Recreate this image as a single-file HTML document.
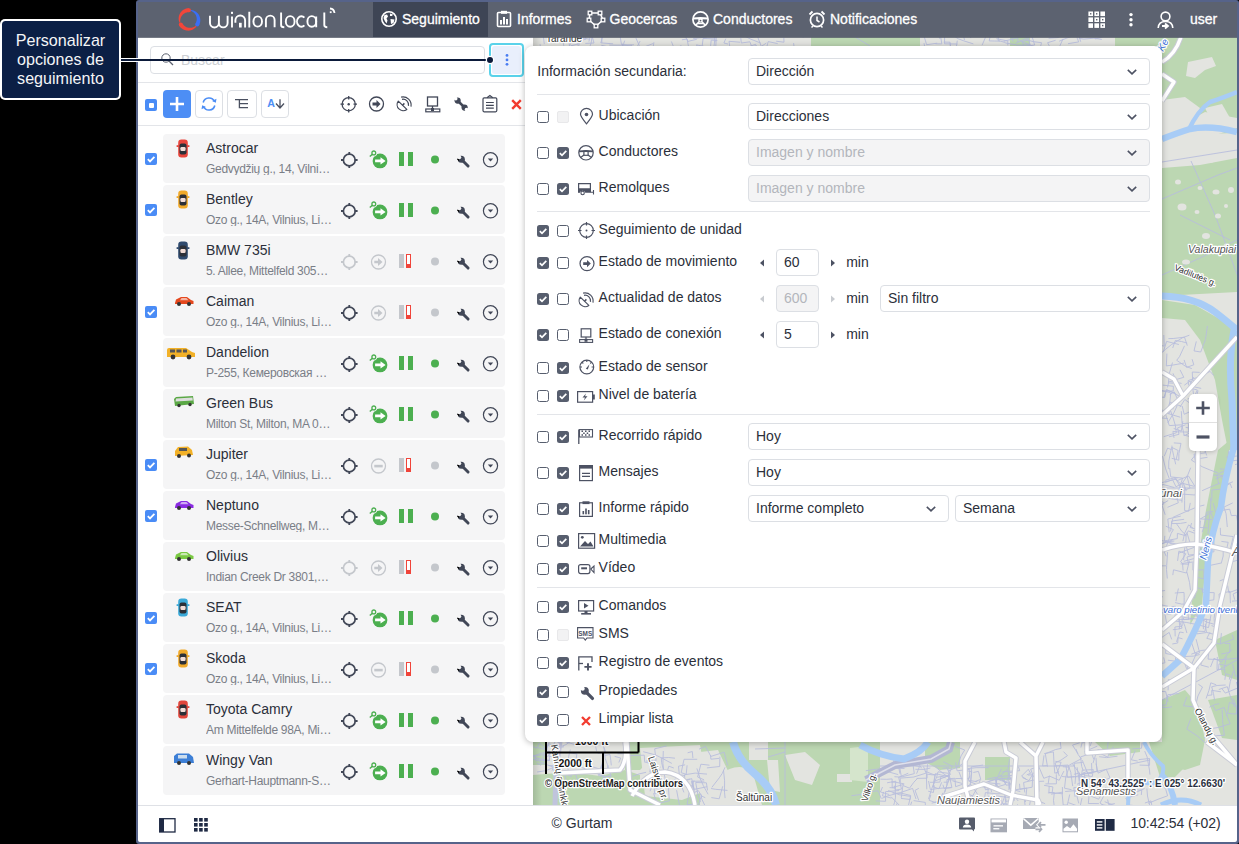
<!DOCTYPE html><html><head><meta charset="utf-8"><style>
*{box-sizing:border-box;margin:0;padding:0}
html,body{width:1239px;height:844px;overflow:hidden;background:#000;font-family:"Liberation Sans", sans-serif;position:relative}
.a{position:absolute}
.t{position:absolute;white-space:nowrap;line-height:1}
svg{position:absolute;overflow:visible}
</style></head><body>
<div class="a" style="left:136px;top:0px;width:1103px;height:844px;background:#56638a;border-radius:3px"></div><div class="a" style="left:138px;top:2px;width:1099px;height:35px;background:#5c6270"></div><div class="a" style="left:138px;top:37px;width:395px;height:768px;background:#fff"></div><div class="a" style="left:533px;top:37px;width:704px;height:768px;background:#e4e4e4;overflow:hidden"><svg style="left:0;top:0" width="704" height="768" viewBox="533 37 704 768"><rect x="533" y="37" width="704" height="768" fill="#e3e4e0"/><path d="M811 37 H920 V48 H811 Z" fill="#bcd7b2"/><path d="M1010 37 H1030 V48 H1010 Z" fill="#bcd7b2"/><path d="M1115 37 H1162 V48 H1115 Z" fill="#bcd7b2"/><path d="M1162 37 H1237 V118 L1205 112 L1190 120 L1162 125 Z" fill="#bcd7b2"/><path d="M1200 140 L1237 128 V292 L1162 296 V160 L1185 156 Z" fill="#bcd7b2"/><path d="M1162 300 L1195 305 L1225 322 L1237 336 V450 L1228 450 L1222 420 L1215 380 L1200 340 L1185 320 L1162 318 Z" fill="#bcd7b2"/><path d="M1218 450 L1230 440 L1226 480 L1215 520 L1206 560 L1202 605 L1190 625 L1192 600 L1198 560 L1206 510 Z" fill="#bcd7b2"/><path d="M1162 700 L1185 690 L1198 705 L1205 740 L1200 765 L1185 770 L1162 765 Z" fill="#bcd7b2"/><path d="M1208 700 L1237 695 V740 L1222 738 Z" fill="#bcd7b2"/><path d="M1215 640 L1237 630 V680 L1222 675 Z" fill="#bcd7b2"/><path d="M533 742 H545 V765 H533 Z" fill="#bcd7b2"/><path d="M533 775 L570 772 L600 776 L625 770 L640 775 L640 805 H533 Z" fill="#bcd7b2"/><path d="M625 742 H700 V760 L680 765 L650 760 L640 770 L625 770 Z" fill="#bcd7b2"/><path d="M640 780 L700 775 L700 805 H640 Z" fill="#bcd7b2"/><path d="M700 742 H868 V805 H700 Z" fill="#bcd7b2"/><path d="M868 742 H880 V805 H868 Z" fill="#bcd7b2"/><path d="M925 742 H960 V768 L940 770 L925 762 Z" fill="#bcd7b2"/><path d="M985 757 H1010 V780 H985 Z" fill="#bcd7b2"/><path d="M1149 742 H1192 V760 L1175 777 L1160 777 Z" fill="#bcd7b2"/><path d="M1095 742 H1140 V752 L1110 756 Z" fill="#bcd7b2"/><path d="M700 752 L718 750 L730 775 L728 805 H700 Z" fill="#e3e4e0"/><path d="M720 775 Q735 762 752 770 L762 805 H722 Z" fill="#e3e4e0"/><path d="M749 742 H768 V760 H749 Z" fill="#e3e4e0"/><path d="M767 760 H778 L780 792 L770 790 Z" fill="#e3e4e0"/><path d="M785 755 L805 752 L820 765 L812 785 L795 780 Z" fill="#e3e4e0"/><path d="M837 774 H852 V782 H837 Z" fill="#e3e4e0"/><path d="M640 748 L700 745 L708 790 L682 800 L645 796 Z" fill="#e3e4e0"/><path d="M1188 62 L1212 57 L1216 66 L1205 70 L1195 78 L1186 76 Z" fill="#e3e4e0"/><path d="M1162 100 L1185 97 L1200 108 L1192 128 L1175 136 L1162 136 Z" fill="#e3e4e0"/><path d="M1162 140 L1200 134 L1237 133 V158 L1200 165 L1162 168 Z" fill="#e3e4e0"/><path d="M1205 108 L1222 104 L1230 118 L1212 122 Z" fill="#e3e4e0"/><path d="M850 748 L868 746 L868 782 L850 780 Z" fill="#d5e5cc"/><path d="M561.2 746.5 L565.8 744.7 L573.2 739.6 L567.3 734.0 L563.0 741.1 M552.4 760.8 L556.9 761.1 L554.8 748.7 L564.0 746.7 M604.0 747.4 L605.2 758.5 L607.3 764.2 L611.0 775.3 L602.8 777.7 M548.6 765.4 L557.6 766.0 L556.3 772.7 L564.5 772.6 L566.2 781.3 M539.8 758.7 L529.9 760.1 L525.2 760.1 L523.1 768.5 M596.6 751.3 L594.2 738.6 L602.0 735.0 L598.7 726.7 M544.3 749.4 L546.0 744.9 L552.4 747.0 L558.2 735.8 M618.8 762.5 L620.7 758.0 L614.6 756.4 M548.9 750.5 L549.6 760.5 L538.8 758.7 L529.1 754.6 M611.3 765.4 L610.8 760.4 L610.0 754.5 L605.0 755.4 M533.0 746.5 L537.0 748.2 L539.3 743.2 L547.1 749.6 L541.2 760.6 M560.1 746.3 L548.1 743.8 L546.8 749.7 L545.2 760.5 M558.9 761.3 L568.0 762.9 L568.6 756.7 L570.3 749.6 M601.6 764.7 L598.6 775.7 L607.5 776.7 L611.7 776.1 M549.8 760.2 L536.0 760.8 L534.7 755.9 L540.2 753.5 L550.1 751.7 M589.8 766.0 L602.4 769.8 L610.4 773.4 M588.3 744.6 L587.9 731.1 L585.0 717.5 L572.9 722.5 L562.7 729.2 M563.5 758.5 L567.7 768.1 L569.3 773.2 L575.3 772.5 L577.7 781.2 M580.4 767.0 L592.5 771.6 L604.5 776.7 L597.6 787.4 M578.5 742.6 L579.5 738.6 L570.8 738.0 L566.2 738.6 L556.7 739.8 M537.9 747.7 L546.2 749.7 L551.0 737.5 L564.2 741.4 L574.7 744.5 M603.2 757.2 L601.0 770.3 L606.0 772.1 L608.1 765.3 M539.4 762.1 L552.0 766.6 L556.9 768.9 M552.1 770.6 L556.7 757.5 L548.5 756.1 M569.7 752.7 L576.9 754.1 L576.2 758.2 M558.7 770.8 L571.2 776.5 L572.6 769.9 M544.3 754.7 L531.1 755.7 L523.9 756.4 L520.5 746.0 L527.1 745.3 M602.7 744.5 L605.9 752.4 L597.8 753.4 M536.8 763.3 L540.9 765.1 L547.0 756.8 L551.8 751.9 M556.5 766.1 L546.1 770.6 L537.1 772.0 M901.3 797.8 L902.9 785.5 L909.5 788.2 L913.9 782.2 L917.6 778.3 M1047.4 765.6 L1042.6 765.9 L1044.0 755.3 M1018.5 766.8 L1019.7 770.7 L1006.0 771.4 L1001.7 772.1 M916.6 778.4 L927.1 778.2 L927.1 774.1 L932.5 774.9 L936.7 774.5 M896.9 803.3 L895.3 815.0 L894.7 822.3 L883.5 823.4 L871.8 826.9 M1005.5 794.4 L1002.1 803.4 L1010.6 808.4 L1019.4 814.8 L1021.2 810.7 M901.0 798.4 L910.2 799.5 L910.7 795.5 L901.9 793.3 L892.6 793.1 M930.4 768.0 L924.3 769.4 L915.4 769.3 M1062.1 776.5 L1068.0 777.1 L1074.6 776.6 L1084.8 776.8 L1083.7 772.3 M899.9 773.7 L898.7 767.0 L903.7 765.9 L916.7 761.1 L921.6 768.2 M969.9 775.7 L968.2 780.2 L977.3 781.8 M1044.0 785.3 L1052.9 786.9 L1052.2 792.5 M961.1 794.1 L960.4 788.9 L971.0 784.5 L978.4 795.5 M1028.0 775.1 L1032.7 774.7 L1032.2 787.2 L1020.0 789.3 L1019.5 783.8 M943.1 795.9 L945.8 788.4 L949.7 777.9 L943.0 773.4 L935.1 766.5 M1062.4 787.0 L1062.5 793.8 L1048.9 792.4 L1049.2 786.1 M958.9 771.7 L963.6 783.9 L955.6 786.7 L954.9 778.3 L948.4 778.7 M898.2 774.6 L885.8 771.1 L878.8 767.6 M955.4 778.5 L969.0 778.5 L969.9 769.3 L957.1 770.8 L955.6 762.4 M1054.6 765.9 L1068.2 765.0 L1070.8 772.5 L1072.7 786.1 M924.8 771.1 L935.0 775.2 L933.0 786.8 L939.0 788.8 L941.7 782.3 M985.7 782.5 L994.3 779.3 L1000.1 776.1 L1006.8 769.6 M943.3 798.6 L943.5 808.0 L954.3 810.5 M918.8 800.4 L915.0 790.4 L918.8 788.3 M952.5 780.9 L964.5 784.0 L965.9 770.4 L971.7 771.9 L970.6 783.4 M1004.7 789.4 L1004.8 794.0 L1006.3 801.7 L1015.3 797.4 L1018.2 801.0 M1022.4 777.6 L1029.0 780.6 L1033.6 772.6 M1012.9 780.1 L1007.7 777.8 L1006.7 782.5 L1002.0 780.3 M1033.7 777.3 L1030.7 769.2 L1038.7 766.4 L1043.8 778.3 L1049.9 776.1 M888.1 766.4 L894.5 768.1 L904.5 768.5 M1071.5 789.7 L1064.5 788.2 L1065.8 777.0 L1069.1 767.2 L1062.8 766.7 M973.1 796.1 L968.2 794.2 L970.5 782.4 L971.5 771.5 M945.6 777.8 L940.9 776.6 L939.9 782.1 L935.5 782.3 L929.9 782.3 M1077.6 775.6 L1086.3 773.3 L1092.0 773.3 L1091.5 763.1 M987.7 796.0 L994.4 797.6 L1000.9 798.4 L1001.2 804.9 M936.3 801.3 L937.3 807.7 L943.5 806.8 L942.6 792.9 M1056.6 774.2 L1061.1 762.3 L1055.3 761.3 M895.0 785.5 L895.5 797.2 L894.6 802.2 L892.4 809.4 M908.3 773.2 L898.6 777.3 L901.5 789.1 L895.7 790.0 L894.1 785.9 M892.7 769.1 L894.1 758.8 L886.4 757.0 M936.7 777.3 L949.3 775.2 L951.9 787.6 L944.1 788.6 L942.9 784.7 M1044.1 781.2 L1038.8 781.4 L1038.9 791.8 M1004.4 779.8 L1006.1 785.2 L1011.2 784.7 L1010.7 796.7 M1047.5 766.7 L1045.3 753.7 L1055.7 749.5 L1061.1 748.4 L1059.7 738.3 M916.6 773.7 L919.5 766.5 L906.1 763.7 M992.5 795.3 L997.6 796.1 L1010.0 797.6 L1008.6 804.5 M1011.8 782.9 L1008.9 773.1 L1017.0 770.6 M971.7 772.2 L971.2 766.9 L983.1 765.0 M888.2 790.5 L899.1 794.7 L910.5 796.4 L907.9 807.9 M1079.2 794.3 L1085.9 792.5 L1084.0 781.4 L1077.0 784.3 M1059.3 776.0 L1055.1 763.0 L1061.1 760.0 L1067.4 755.7 L1063.5 751.6 M1059.1 771.7 L1054.8 773.2 L1054.1 764.7 L1053.4 751.9 L1044.2 753.6 M954.3 780.0 L947.0 779.5 L946.8 785.3 L944.9 792.0 M1007.8 804.4 L1003.6 803.5 L1002.6 813.7 L989.7 812.4 L988.8 822.5 M880.5 779.2 L886.8 779.3 L892.1 778.9 L892.2 787.6 L903.8 784.4 M899.2 790.5 L885.5 791.7 L885.6 801.3 L875.9 800.9 M1026.7 774.9 L1030.6 773.3 L1028.3 769.3 L1021.6 776.1 L1026.6 779.5 M1009.5 781.6 L1009.5 788.6 L1020.3 791.6 M881.3 798.8 L878.2 790.8 L871.6 791.5 L864.7 794.0 L851.4 795.7 M933.2 787.2 L935.4 773.6 L948.7 776.8 L948.9 767.7 L942.5 768.4 M911.8 801.6 L908.6 811.1 L899.8 805.7 L891.1 796.8 M1047.9 792.9 L1054.3 792.6 L1053.5 800.4 L1055.1 813.4 L1059.9 811.6 M949.0 770.7 L959.0 766.3 L962.7 763.5 M998.1 779.5 L1010.8 783.9 L1012.0 778.0 L999.5 778.6 L988.4 781.5 M900.0 768.9 L901.4 777.0 L914.3 773.6 L913.2 766.0 M1000.4 784.0 L988.6 782.8 L987.8 794.5 M889.6 787.6 L895.3 788.0 L895.8 781.2 L887.1 782.8 M1045.1 803.7 L1039.0 801.1 L1037.2 807.0 L1036.4 812.6 L1033.9 821.2 M900.9 778.1 L913.8 777.0 L926.1 773.1 L923.5 766.6 M980.2 780.2 L976.7 788.8 L971.5 797.9 M984.3 799.7 L985.4 792.6 L997.0 793.8 L1004.4 793.6 L1010.7 794.7 M1030.9 798.1 L1028.8 809.1 L1027.6 814.6 M931.7 803.2 L936.5 801.8 L939.1 806.6 L931.2 809.5 L938.2 820.6 M957.7 766.4 L961.0 755.9 L964.7 750.0 L955.4 746.4 M928.5 799.1 L931.8 788.4 L936.7 776.9 L938.0 771.8 L948.2 773.3 M928.5 781.0 L930.4 789.6 L938.4 788.4 L951.1 787.5 M882.1 798.3 L887.8 795.9 L900.8 792.5 L912.6 788.4 L916.0 799.0 M1038.5 779.8 L1032.4 780.3 L1023.6 782.5 L1024.8 792.5 M934.9 781.0 L944.5 777.3 L950.5 774.4 L946.3 767.6 M1078.8 803.4 L1075.5 790.6 L1065.2 791.5 M1024.1 797.6 L1025.7 809.8 L1018.8 810.8 L1007.1 811.6 L1005.3 799.2 M1017.5 804.3 L1017.7 816.3 L1010.7 817.3 L1009.1 807.2 L1001.5 807.8 M891.4 798.1 L882.4 795.8 L883.7 791.9 M894.4 776.7 L900.2 777.1 L900.3 782.6 M913.6 800.6 L925.3 802.4 L925.5 813.3 L928.3 825.4 L928.6 834.9 M1045.4 783.9 L1056.4 783.8 L1056.3 774.4 M1048.2 783.7 L1049.3 776.0 L1059.2 780.3 L1063.9 771.1 M889.2 794.5 L880.4 792.0 L882.5 787.0 M1005.1 778.5 L995.6 779.9 L997.5 787.0 L985.5 789.8 L982.9 781.2 M934.3 785.3 L933.4 792.5 L928.2 791.2 M1079.3 781.0 L1079.6 773.0 L1073.9 774.3 M1011.6 796.6 L1012.7 785.9 L1014.3 775.2 L1004.0 776.1 L999.0 775.9 M964.3 769.0 L976.1 767.7 L988.7 767.6 M943.7 782.2 L948.1 782.2 L949.2 774.1 L952.2 766.2 L943.3 761.8 M975.1 781.5 L980.8 779.3 L978.4 771.4 L973.3 772.5 M904.3 783.9 L895.9 782.3 L891.4 782.1 M1051.1 794.2 L1062.0 792.2 L1063.2 805.0 L1067.3 805.1 L1069.7 794.5 M942.2 794.2 L938.3 803.5 L929.1 800.3 L930.8 794.9 M1009.0 790.2 L1008.7 776.7 L1008.0 770.0 L1009.5 759.1 M1001.2 804.1 L1000.3 813.9 L1011.1 814.2 L1017.4 815.2 M880.3 775.5 L878.3 768.9 L865.8 770.7 M1075.1 796.9 L1073.8 787.6 L1079.8 787.7 M926.8 789.3 L926.4 776.0 L927.6 764.2 M987.2 779.2 L996.2 777.1 L996.5 786.3 L990.5 786.5 L991.6 792.2 M995.6 779.4 L997.3 786.9 L1005.6 784.4 L1001.0 775.6 M1001.4 768.8 L997.7 776.8 L994.1 789.6 L981.0 786.4 L968.5 781.0 M947.8 804.8 L946.2 800.7 L954.7 799.3 M1008.0 801.9 L1014.2 800.6 L1014.4 789.9 L1026.8 788.1 L1025.4 802.0 M1068.3 802.6 L1080.0 806.9 L1082.0 798.0 M1077.1 767.2 L1079.2 780.5 L1079.5 790.3 M1082.9 762.4 L1074.1 763.3 L1075.7 775.2 L1075.0 783.9 M1086.8 794.5 L1098.7 799.2 L1105.5 787.5 L1113.4 794.1 M1099.2 756.7 L1106.5 757.6 L1117.5 756.2 M1107.9 751.4 L1107.6 747.2 L1108.3 739.9 M1083.2 770.7 L1081.7 766.4 L1080.6 756.9 L1091.6 753.3 L1093.8 759.5 M1082.3 760.2 L1087.5 773.0 L1091.6 772.4 L1096.9 771.3 L1096.0 757.9 M1107.6 799.5 L1108.7 804.7 L1114.9 803.6 M1080.9 747.5 L1082.3 741.6 L1085.5 731.8 M1090.2 746.1 L1092.9 737.4 L1105.0 740.0 M1105.7 790.1 L1103.6 796.2 L1100.0 803.0 L1108.0 808.5 M1144.9 803.0 L1151.0 800.9 L1153.3 813.4 L1153.6 818.0 L1162.4 819.6 M1135.3 750.5 L1131.3 759.8 L1137.7 761.1 M1144.5 788.5 L1135.0 792.8 L1130.6 782.7 L1126.3 785.0 L1129.7 788.9 M1132.1 748.9 L1141.5 748.2 L1142.1 742.7 M1104.7 801.7 L1114.9 805.8 L1122.7 810.7 L1119.5 813.9 M1093.0 763.1 L1096.6 751.6 L1107.7 757.2 L1109.7 752.1 L1113.4 746.7 M1075.9 748.9 L1078.1 754.5 L1081.2 758.8 L1069.4 765.0 M1148.5 803.3 L1157.9 799.3 L1167.6 795.8 L1165.8 789.6 L1162.6 784.1 M1097.9 782.8 L1110.0 777.9 L1106.3 769.3 L1098.1 773.1 L1096.0 763.6 M1081.6 776.4 L1082.2 770.2 L1093.3 769.6 L1092.3 776.5 L1085.2 775.6 M1089.2 776.4 L1086.8 771.3 L1080.5 774.9 L1072.4 763.7 M1076.6 776.7 L1067.5 777.2 L1066.0 765.7 M1146.9 788.5 L1147.5 796.0 L1149.8 805.9 L1140.6 806.4 L1127.5 804.8 M1122.3 781.8 L1122.6 785.9 L1122.9 794.8 M1138.7 759.6 L1149.6 758.5 L1149.5 765.4 L1139.6 765.1 M1134.0 795.5 L1133.4 789.7 L1141.8 790.2 L1141.3 795.0 M1138.3 794.8 L1125.8 798.1 L1129.0 803.8 L1121.3 809.2 M1149.9 774.6 L1149.5 770.2 L1147.1 756.9 L1144.7 751.1 M1105.1 777.4 L1102.2 785.7 L1090.6 779.8 L1082.0 776.3 M1098.9 803.6 L1088.3 803.5 L1089.6 791.4 M1106.6 751.9 L1097.9 749.4 L1096.8 753.9 M1101.5 804.6 L1113.2 806.6 L1110.6 815.7 M1082.4 743.0 L1093.7 739.9 L1103.4 736.0 L1108.4 733.9 M1084.1 751.9 L1089.3 749.6 L1097.3 746.1 M1079.7 742.8 L1072.5 745.1 L1077.9 753.8 M1169.3 404.9 L1178.4 401.2 L1174.2 391.8 L1169.5 394.8 M1174.0 437.9 L1172.9 431.4 L1177.5 431.8 L1188.7 432.1 L1188.5 424.1 M1192.1 359.2 L1193.8 364.8 L1186.6 367.4 L1184.1 359.9 M1198.5 380.7 L1192.6 380.4 L1192.3 372.0 L1199.7 372.4 M1166.9 353.6 L1166.3 365.9 L1173.8 364.9 L1183.9 363.1 M1198.1 390.6 L1196.5 395.6 L1191.1 404.0 L1184.8 399.5 L1179.9 407.2 M1166.7 391.6 L1162.5 390.7 L1155.6 389.0 L1159.3 378.7 M1187.2 343.1 L1181.5 341.5 L1175.3 340.5 L1172.7 348.0 M1196.5 423.0 L1194.9 427.0 L1189.4 436.4 M1188.7 385.5 L1188.1 380.6 L1200.5 376.3 L1210.1 371.4 L1213.8 375.6 M1167.9 418.6 L1158.4 417.5 L1156.7 428.6 M1187.5 399.0 L1193.9 396.8 L1192.5 387.0 L1190.2 381.0 L1184.3 385.2 M1165.3 413.4 L1170.4 402.2 L1177.2 405.5 L1174.2 412.2 L1167.8 422.8 M1181.3 411.2 L1182.1 423.6 L1188.0 423.2 L1197.5 424.2 L1199.3 410.6 M1171.9 445.6 L1172.5 450.5 L1173.7 455.8 L1175.7 464.3 M1181.6 383.4 L1168.9 381.2 L1167.5 387.4 M1182.8 421.3 L1181.3 431.1 L1173.7 428.5 M1173.0 373.3 L1175.7 379.7 L1183.8 377.3 L1180.0 369.8 M1168.4 338.6 L1173.2 338.5 L1184.5 337.2 L1187.3 345.6 M1191.8 368.6 L1185.4 366.2 L1176.7 360.3 L1179.6 356.5 L1184.5 345.8 M1169.1 406.6 L1173.2 418.1 L1175.4 425.6 L1176.3 432.8 L1163.7 436.7 M1163.6 398.0 L1166.7 389.6 L1179.1 396.0 M1165.0 412.6 L1169.3 425.6 L1181.8 424.8 L1184.3 435.7 L1193.3 431.1 M1172.8 409.4 L1175.6 401.5 L1178.7 396.7 M1173.2 383.2 L1168.4 382.9 L1169.0 374.6 L1172.5 362.5 M1185.6 427.3 L1195.5 429.3 L1193.6 437.3 L1183.4 435.0 M1182.2 406.0 L1184.2 414.3 L1193.1 410.2 L1200.7 407.2 L1208.0 403.0 M1168.9 436.8 L1179.0 434.3 L1177.6 427.9 L1185.6 424.8 M1166.3 391.6 L1170.8 393.0 L1169.8 402.0 L1167.2 413.3 L1180.2 417.2 M1193.5 377.0 L1189.7 385.9 L1201.2 388.4 M1163.8 335.0 L1164.2 346.1 L1159.4 345.2 M1196.9 434.5 L1198.3 446.5 L1198.5 458.7 L1207.5 457.3 M1189.4 335.2 L1182.6 337.7 L1171.3 344.7 L1165.5 349.4 L1156.1 357.6 M1192.1 388.6 L1197.4 390.0 L1192.6 399.6 M1171.5 449.7 L1167.6 448.1 L1164.3 456.2 M1163.3 351.9 L1166.6 341.4 L1178.9 344.5 M1175.7 393.4 L1166.1 389.9 L1164.8 397.4 L1156.1 396.7 L1156.0 389.4 M1162.8 385.1 L1173.4 386.3 L1173.2 391.0 L1163.4 391.2 L1149.8 388.2 M1196.3 341.4 L1194.0 350.9 L1200.7 352.0 L1205.5 339.5 L1207.4 326.0 M1181.3 406.2 L1173.7 403.6 L1169.2 413.4 L1157.5 407.9 L1153.9 412.2 M1227.3 527.0 L1226.1 513.8 L1223.9 507.1 L1232.7 502.9 M1187.5 606.6 L1197.3 607.3 L1197.3 619.1 L1184.2 617.6 M1175.1 602.6 L1181.7 604.1 L1186.1 604.0 L1188.0 613.9 L1188.6 619.8 M1171.7 458.3 L1178.8 460.2 L1178.9 453.5 L1181.0 443.4 L1173.8 442.9 M1198.5 553.7 L1187.0 557.0 L1188.6 564.2 L1180.6 563.9 M1163.9 503.9 L1153.7 508.1 L1151.4 504.5 L1142.9 512.5 L1148.5 517.7 M1206.1 544.3 L1199.7 545.9 L1195.6 546.9 L1184.5 550.9 L1178.2 553.4 M1182.5 493.0 L1180.7 487.8 L1175.2 477.6 L1165.3 480.3 M1199.6 544.4 L1201.2 551.9 L1213.9 551.9 L1214.1 544.4 L1212.4 530.7 M1230.4 603.2 L1230.0 591.3 L1219.0 594.0 L1220.0 607.1 M1166.5 545.9 L1171.2 533.3 L1173.4 529.6 L1165.8 526.2 M1186.5 522.4 L1180.4 523.4 L1171.6 523.6 L1172.8 518.4 M1186.9 532.5 L1189.8 542.2 L1185.7 544.2 L1188.7 555.1 L1201.2 553.7 M1172.5 609.2 L1185.7 612.8 L1186.3 605.8 M1169.3 478.7 L1165.7 468.9 L1162.6 456.5 L1156.7 457.7 M1164.8 535.8 L1164.5 540.9 L1177.3 538.6 L1177.4 533.4 L1186.3 535.9 M1213.4 475.1 L1227.0 475.5 L1226.6 469.4 L1219.9 468.9 M1182.2 614.3 L1182.1 626.2 L1174.9 627.0 L1175.2 636.4 M1192.8 618.9 L1183.4 619.7 L1184.7 611.9 L1195.9 616.2 M1207.6 607.5 L1199.9 606.2 L1196.4 616.2 L1206.7 622.1 L1217.2 625.1 M1195.2 563.6 L1198.7 555.6 L1203.8 548.0 M1190.5 590.2 L1189.5 582.4 L1186.9 572.1 M1221.8 562.9 L1209.5 565.5 L1207.8 556.9 L1203.1 556.6 M1177.4 478.8 L1172.0 480.0 L1161.9 482.6 M1165.2 514.8 L1161.7 504.4 L1168.2 500.5 M1196.0 465.0 L1194.0 454.2 L1205.2 452.9 L1205.3 447.4 M1198.7 562.2 L1192.1 562.1 L1182.5 563.4 L1183.1 570.5 M1186.3 491.1 L1183.2 482.7 L1176.0 486.8 L1172.6 479.8 L1165.3 482.4 M1184.1 519.3 L1171.8 521.0 L1171.2 526.8 L1170.6 531.4 M1167.3 578.5 L1166.5 569.6 L1166.7 565.3 L1167.6 552.0 M1193.1 530.5 L1198.5 530.2 L1198.9 518.8 L1212.1 519.6 M1219.7 580.9 L1228.8 577.5 L1226.2 573.4 M1166.1 565.8 L1156.6 565.9 L1146.8 566.5 M1227.4 474.7 L1221.7 476.3 L1215.6 478.8 M1211.8 500.8 L1211.9 490.0 L1224.5 488.8 L1223.9 495.3 M1177.6 560.9 L1178.9 551.1 L1185.8 553.8 L1180.6 561.8 L1183.7 564.4 M1204.4 505.0 L1197.7 506.7 L1185.0 512.0 L1172.8 517.4 M1177.2 480.6 L1188.5 476.0 L1195.5 487.2 M1174.3 487.5 L1162.4 484.3 L1157.9 494.5 L1156.9 499.4 L1164.3 502.8 M1215.0 525.2 L1211.0 512.6 L1200.4 518.9 M1227.6 585.5 L1228.8 592.7 L1240.1 588.6 L1238.4 584.6 M1183.8 561.3 L1194.7 558.4 L1197.5 565.9 M1171.2 607.0 L1175.3 606.2 L1175.0 619.3 L1187.6 619.5 M1218.7 484.2 L1216.8 474.6 L1225.8 470.3 M1232.8 561.6 L1241.0 559.2 L1238.2 552.1 L1231.4 553.7 M1196.1 577.0 L1203.8 579.0 L1203.9 569.8 L1192.9 570.2 L1192.9 562.7 M1217.1 511.1 L1229.7 509.2 L1231.3 515.6 L1236.5 515.4 L1238.1 524.7 M1174.3 541.0 L1167.5 541.8 L1162.4 543.2 M1202.1 490.7 L1210.2 487.1 L1220.3 483.0 M1174.8 593.0 L1184.0 592.4 L1184.2 597.6 L1184.1 603.9 L1182.7 612.9 M1167.5 507.3 L1178.3 502.8 L1176.5 495.6 L1182.3 494.5 L1181.9 502.6 M1221.1 475.2 L1224.7 486.3 L1230.2 483.6 L1231.8 488.0 M1198.0 534.5 L1188.3 530.9 L1185.9 534.8 L1182.1 531.6 L1176.4 523.6 M1217.9 472.9 L1209.8 469.9 L1202.1 466.7 L1191.3 460.0 L1197.5 452.3 M1170.7 614.6 L1164.4 613.2 L1158.2 612.0 M1232.0 601.2 L1243.9 600.1 L1251.3 600.5 L1251.3 605.3 M1221.4 562.8 L1223.2 556.0 L1223.2 550.9 M1207.4 527.8 L1199.8 527.5 L1200.5 520.6 M1176.0 601.2 L1176.8 596.1 L1178.4 588.5 M1186.9 475.7 L1190.0 488.1 L1183.2 490.5 L1173.3 492.4 L1174.3 496.4 M1180.4 546.1 L1175.5 545.1 L1164.6 541.3 L1151.8 537.9 L1153.4 533.4 M1182.0 500.3 L1171.2 498.8 L1166.8 497.4 L1159.5 495.1 L1158.7 507.5 M1190.3 502.9 L1188.6 511.3 L1184.6 510.5 L1184.6 500.7 L1184.8 486.7 M1210.1 497.7 L1210.9 501.9 L1210.2 512.4 L1208.9 521.2 L1208.0 534.2 M1205.1 590.4 L1196.5 587.3 L1194.6 598.5 M1230.1 549.8 L1233.3 536.6 L1220.5 535.0 L1220.3 527.8 M1213.1 511.5 L1206.5 512.2 L1205.2 522.3 L1202.2 532.2 M1182.9 541.1 L1184.6 533.3 L1188.6 524.9 L1192.8 528.0 M1165.1 590.5 L1158.5 591.4 L1157.6 604.1 L1168.1 606.3 M1215.4 608.1 L1214.1 618.4 L1214.7 626.4 L1213.8 634.3 L1206.6 632.4 M1172.8 575.1 L1173.5 569.8 L1186.4 573.0 L1189.4 560.8 M1194.4 486.4 L1182.9 483.4 L1182.2 494.1 L1195.2 495.0 L1197.5 483.0 M1183.6 560.1 L1184.6 549.0 L1186.0 540.0 L1186.1 533.8 M1204.7 601.0 L1213.8 599.9 L1214.2 592.7 L1202.5 592.3 L1202.2 587.7 M1206.7 455.5 L1204.4 448.9 L1213.6 448.0 M1221.5 485.5 L1225.7 484.5 L1232.9 481.8 M1168.7 469.1 L1168.8 461.0 L1171.6 447.3 L1178.2 450.5 L1176.3 459.0 M1234.7 599.7 L1233.1 594.0 L1243.6 589.0 L1240.7 580.3 L1252.4 578.2 M1181.9 545.2 L1169.0 542.4 L1165.0 541.3 M1163.0 596.8 L1157.3 596.5 L1149.8 596.9 L1151.4 602.4 L1147.4 603.8 M1169.7 468.1 L1170.7 476.9 L1182.6 478.1 L1178.5 491.2 M1180.8 516.1 L1167.8 519.0 L1169.2 532.4 M1216.9 515.3 L1215.3 510.5 L1213.2 503.0 M1235.0 464.6 L1244.0 462.2 L1243.5 454.9 L1244.7 446.1 L1246.0 442.3 M1190.7 467.7 L1187.5 475.6 L1181.3 484.5 L1174.1 477.9 M1197.3 518.0 L1195.2 528.8 L1190.2 527.5 L1191.6 523.1 M1228.7 450.8 L1227.5 461.2 L1241.2 459.9 L1239.7 455.7 L1226.2 457.1 M1203.7 548.3 L1201.9 539.8 L1207.0 539.4 M1172.7 539.9 L1160.4 544.4 L1162.7 548.0 L1166.2 556.3 M1221.4 541.4 L1228.2 542.3 L1226.0 551.7 L1238.3 551.5 L1240.2 562.4 M1194.2 631.0 L1204.9 631.5 L1206.9 619.1 L1200.2 619.5 M1173.1 680.6 L1168.4 679.5 L1168.1 690.4 M1190.9 718.4 L1186.8 729.1 L1197.2 735.9 L1205.3 742.8 L1211.8 737.5 M1232.7 664.2 L1235.4 676.3 L1240.1 674.8 L1246.4 686.8 M1219.2 703.7 L1215.1 704.5 L1209.4 707.2 M1186.7 697.0 L1183.5 705.8 L1196.0 707.0 M1189.5 673.7 L1188.2 669.4 L1184.6 656.5 L1193.7 656.1 L1199.7 654.5 M1228.4 691.4 L1230.3 681.5 L1233.4 671.0 M1191.3 654.2 L1201.1 650.5 L1211.4 649.4 M1167.2 626.8 L1165.3 615.7 L1162.1 608.7 M1216.2 684.8 L1210.8 682.8 L1208.9 690.5 L1206.1 698.5 M1226.6 666.1 L1219.0 663.8 L1218.5 669.9 M1182.8 621.0 L1184.9 626.2 L1186.9 633.0 M1172.8 629.7 L1177.6 629.2 L1182.1 628.1 L1177.4 615.7 L1187.5 610.9 M1217.3 657.0 L1217.0 669.8 L1224.8 669.1 M1176.5 641.9 L1179.7 632.0 L1183.7 632.7 M1224.7 643.5 L1229.9 643.4 L1229.8 652.3 L1221.2 654.0 M1193.9 626.1 L1197.0 633.9 L1206.5 632.5 L1205.2 623.8 M1227.3 716.2 L1224.2 707.5 L1215.6 710.5 L1213.3 706.2 M1233.0 698.5 L1236.7 708.1 L1245.9 702.8 L1253.4 710.8 M1175.5 621.1 L1186.8 622.5 L1198.3 624.9 L1208.5 627.6 L1211.0 614.9 M1226.3 656.8 L1224.6 666.6 L1224.8 672.8 M1235.2 703.9 L1229.3 702.6 L1227.5 713.3 L1236.3 714.1 L1237.1 705.0 M1236.4 682.1 L1238.0 687.9 L1225.3 693.1 L1221.8 688.5 M1163.7 657.4 L1165.0 662.8 L1156.4 664.3 M1172.3 644.0 L1177.7 643.0 L1178.1 637.6 L1182.5 638.8 M1168.0 701.9 L1165.7 691.6 L1159.1 691.4 L1154.5 691.5 L1151.7 704.2 M1234.5 707.0 L1230.0 695.4 L1227.3 686.7 L1218.8 689.5 M1222.1 709.9 L1222.8 722.8 L1224.3 735.3 L1216.2 735.7 L1204.1 737.7 M1208.8 667.2 L1200.7 665.0 L1204.5 654.6 M1196.9 652.4 L1191.4 664.8 L1198.7 668.2 M1179.4 693.5 L1167.8 694.7 L1166.2 705.0 L1157.1 705.4 M1210.5 667.0 L1214.0 658.2 L1221.4 662.2 L1228.1 653.5 L1231.9 649.4 M1209.2 649.2 L1208.0 659.1 L1220.5 659.7 L1232.7 658.7 L1243.3 657.6 M1229.3 679.6 L1230.1 675.3 L1225.6 673.6 L1224.9 679.8 M1220.9 643.6 L1233.8 639.1 L1232.2 634.7 M1193.3 667.9 L1186.7 668.8 L1183.1 659.3 M1171.9 706.8 L1166.5 707.6 L1157.0 706.7 L1154.3 718.8 M1215.8 642.9 L1220.3 644.2 L1221.4 633.1 M1179.3 629.3 L1179.6 625.2 L1178.4 612.9 M1181.4 662.3 L1175.2 661.1 L1174.9 668.0 M1196.1 639.2 L1199.6 652.7 L1195.5 654.7 L1191.7 643.0 M1214.6 700.5 L1213.5 693.5 L1211.7 686.8 L1217.1 685.5 L1225.7 685.0 M1220.9 691.8 L1211.7 690.3 L1211.9 695.0 L1207.3 695.4 M1195.7 705.2 L1197.9 696.1 L1202.5 687.0 L1198.4 684.3 M1226.4 714.3 L1230.2 723.8 L1218.2 727.5 L1209.9 728.8 L1213.6 739.1 M1165.8 648.8 L1165.7 653.5 L1175.6 655.4 L1175.5 661.2 L1167.9 660.2 M1203.4 629.2 L1203.2 619.1 L1211.0 620.0 M1171.7 639.4 L1169.2 632.4 L1161.7 637.5 L1152.7 646.3 L1144.0 639.0 M1211.5 625.6 L1218.5 628.0 L1213.8 640.1 L1206.8 638.4 L1210.0 632.2 M635.9 38.0 L639.2 45.4 L641.9 54.7 L652.3 53.4 L653.9 42.3 M601.9 42.9 L601.6 37.6 L602.2 26.9 L589.8 27.2 M570.8 45.4 L584.2 48.9 L582.1 57.3 L579.5 62.9 L575.2 61.2 M540.1 44.2 L540.6 48.8 L544.9 60.7 L549.6 71.7 L540.5 76.7 M777.7 43.6 L768.2 41.6 L764.6 55.1 L764.3 63.5 M714.0 38.9 L703.1 38.5 L701.9 48.1 L693.7 46.7 L679.7 47.1 M756.2 44.1 L746.7 47.5 L752.8 58.8 L756.8 65.5 L762.3 71.5 M622.5 43.6 L622.5 47.7 L630.3 48.1 L635.8 49.5 L640.1 41.0 M631.4 45.3 L631.3 57.8 L628.5 71.1 L627.4 76.5 L637.7 76.6 M696.8 39.3 L687.9 41.4 L682.6 30.9 M578.0 44.0 L571.8 45.5 L572.0 51.5 M562.9 41.2 L565.5 54.2 L569.4 53.3 L569.3 40.4 M571.7 41.1 L568.3 48.5 L566.5 54.2 L573.1 57.8 M577.0 39.0 L583.9 36.8 L591.3 33.4 L594.0 43.0 L585.3 43.4 M671.4 41.5 L674.3 48.8 L681.2 45.7 L686.6 55.4 L678.7 59.0 M544.3 44.1 L542.9 33.0 L541.4 24.8 L551.3 21.1 L564.4 18.0 M717.4 40.6 L711.2 40.1 L710.4 48.1 L715.7 48.0 L716.4 36.0 M631.9 45.1 L621.5 44.6 L620.4 38.1 L619.2 26.3 M750.6 37.6 L757.4 36.3 L761.3 46.4 L766.4 43.0 M573.0 39.1 L584.3 38.4 L589.3 39.2 M783.8 37.8 L784.0 42.2 L776.2 41.2 M725.8 38.6 L723.9 43.0 L728.0 44.0 M578.8 41.2 L586.1 39.1 L581.4 26.1 L588.7 22.7 L596.2 34.1 M580.6 38.6 L577.7 49.6 L587.7 51.9 L591.2 43.1 L592.2 34.8 M624.7 40.6 L621.8 49.3 L614.1 48.2 L605.3 46.2 L601.3 45.3 M715.1 42.1 L713.1 28.7 L709.0 16.4 L697.2 22.0 M756.4 45.9 L749.8 47.0 L740.4 49.3 L733.8 51.0 L736.9 62.9 M740.0 42.2 L729.0 41.3 L730.6 53.0 L743.1 50.4 M653.2 43.5 L643.4 47.3 L650.4 57.4 L642.8 64.7 M588.9 41.6 L591.8 29.8 L604.1 32.5 L600.8 42.9 L613.1 43.8 M696.7 44.8 L698.3 57.3 L694.0 57.1 L693.0 52.4 M696.4 44.9 L708.6 47.3 L713.9 47.5 L715.3 35.2 M577.6 45.4 L579.5 39.2 L566.7 37.0 M803.2 37.6 L803.4 31.4 L815.1 34.4 L822.9 34.5 M756.8 45.7 L751.9 47.2 L749.9 41.8 L741.3 43.0 L740.8 38.1 M693.3 38.5 L707.0 36.9 L706.2 30.1 M681.9 39.8 L687.1 39.0 L688.5 46.6 L689.2 55.3 M793.6 43.0 L794.3 48.8 L787.9 48.0 L783.9 48.5 L775.2 51.4 M760.6 43.0 L750.6 39.1 L744.6 36.1 M609.3 45.1 L622.3 45.2 L628.1 45.4 L633.9 44.7 M1101.8 39.4 L1093.8 38.2 L1083.9 39.1 L1078.8 38.3 M1020.3 40.9 L1033.2 46.2 L1040.4 49.4 M1027.5 40.2 L1022.0 41.4 L1025.8 50.5 M1018.0 42.2 L1017.2 30.7 L1014.7 22.9 L1010.6 23.2 L1009.6 18.4 M1003.7 41.3 L1017.2 37.9 L1014.9 29.2 L1009.2 30.5 L1013.1 41.5 M935.4 43.8 L941.8 43.9 L940.5 35.6 L932.2 36.1 M1017.1 45.9 L1015.2 52.5 L1020.1 53.5 M957.3 40.6 L956.3 47.2 L943.3 48.0 L942.9 58.6 M937.1 43.2 L926.6 44.7 L924.3 37.0 L923.8 32.4 M1025.9 45.9 L1034.7 45.0 L1030.7 32.4 L1029.6 25.6 L1029.7 16.8 M1005.3 42.9 L1018.9 45.3 L1030.1 44.6 L1028.1 37.6 L1015.8 43.1 M1055.6 40.3 L1047.6 42.7 L1052.0 51.1 L1042.1 54.1 M970.8 38.1 L969.4 34.3 L964.6 35.0 M982.1 45.2 L986.8 34.3 L989.7 27.8 L983.0 24.8 L986.2 15.8 M1048.6 38.2 L1058.6 37.5 L1058.2 30.7 L1058.8 18.9 L1059.3 7.9 M1026.1 39.6 L1033.0 41.6 L1041.5 42.7 L1039.5 51.0 M1063.0 38.9 L1058.7 48.5 L1056.5 55.8 L1061.0 56.6 M1005.3 42.5 L998.2 40.5 L998.9 28.6 M939.9 38.8 L934.9 26.8 L943.1 25.1 M950.0 42.8 L951.7 55.9 L963.9 53.2 M957.5 44.0 L944.5 43.8 L944.7 29.9 M996.4 38.7 L1007.8 41.0 L1007.8 45.4 M924.0 43.1 L926.0 54.0 L935.3 50.9 M943.7 42.1 L950.0 42.2 L950.8 50.3 M964.5 40.0 L963.1 33.7 L959.4 24.1 L956.9 12.2 M1059.2 41.2 L1067.2 37.9 L1078.4 34.2 L1080.7 41.7 M1068.0 43.7 L1078.7 41.9 L1076.9 37.4 M1000.0 41.1 L994.3 41.0 L989.2 40.9 L990.5 34.9 L997.8 36.0 M973.4 43.9 L963.3 40.7 L958.3 38.8 L952.0 34.9 M1095.2 39.0 L1100.9 37.3 L1108.5 34.7 L1103.3 25.0 L1095.9 27.4 M855 37 L870 46 M664.5 789.7 L660.1 789.0 L654.2 788.1 L654.7 793.9 L664.9 791.7 M690.1 779.0 L684.8 779.9 L684.5 774.8 L695.2 773.1 L707.0 774.1 M683.7 782.9 L674.8 782.4 L663.1 778.7 L658.9 776.3 M700.7 793.7 L701.9 799.3 L706.3 808.5 M694.0 780.4 L691.7 787.1 L690.8 791.3 M699.1 749.1 L705.5 746.4 L710.9 756.4 L724.2 752.2 L727.6 765.5 M692.7 782.4 L694.3 791.8 L695.8 804.5 L687.1 804.6 L689.3 791.4 M688.4 787.1 L690.9 794.6 L698.2 790.4 L702.1 796.7 M689.0 783.0 L681.5 783.7 L668.3 781.9 M650.0 791.2 L654.8 780.3 L649.0 777.2 M646.1 761.0 L656.1 760.8 L654.7 748.8 L666.7 745.9 M676.6 790.2 L678.8 801.8 L680.6 810.3 M668.4 787.8 L669.4 800.8 L657.0 803.6 L655.4 798.9 L653.6 793.2 M652.6 778.4 L656.6 765.1 L644.1 761.8 M675.0 758.2 L668.7 757.5 L661.3 757.9 L661.6 762.6 L663.3 769.4 M687.6 752.8 L692.3 751.5 L692.9 758.1 M659.5 769.7 L651.6 771.5 L651.8 776.6 L654.4 787.3 L660.4 787.4 M665.2 778.6 L664.1 774.0 L662.9 763.3 L663.3 751.0 M693.8 790.6 L691.4 781.3 L704.4 781.1 M647.7 780.2 L650.4 774.2 L661.4 780.0 M696.9 768.4 L700.1 778.5 L703.3 785.6 L708.1 794.3 M643.2 751.7 L654.7 754.7 L659.4 756.8 L671.8 763.4 M687.1 765.3 L686.2 774.3 L681.2 772.7 L684.0 759.3 L697.2 759.3 M660.9 778.4 L660.3 771.6 L649.8 772.1 L650.7 766.2 L660.7 767.1 M673.8 768.0 L668.8 766.2 L667.5 770.4 M691.3 790.8 L692.3 785.9 L683.3 784.7 M663.7 785.5 L671.9 781.8 L675.8 778.9 M644.6 761.6 L644.3 755.2 L630.5 755.5 L622.6 753.7 L617.5 753.8 M685.1 775.6 L679.3 774.7 L678.5 766.2 L685.1 764.8 M646.1 772.3 L639.2 773.9 L632.5 776.3 M725.0 767.3 L722.3 773.3 L719.3 777.8 L711.9 787.3 M707.2 786.7 L694.2 789.4 L691.7 778.6 L680.3 782.5 L683.9 792.4 M725.1 798.1 L724.5 792.2 L724.6 780.8 L723.5 770.3 M705.3 797.7 L701.3 795.9 L698.0 806.8 L696.2 812.3 M707.5 790.4 L706.4 782.8 L695.7 782.5 L698.0 795.2 L700.4 802.1 M704.0 779.8 L697.6 777.0 L700.9 764.2 L709.5 765.2 M710.5 755.0 L710.9 759.2 L719.0 758.4 M706.9 767.9 L719.7 766.5 L719.9 756.6 M722.7 786.3 L719.2 798.8 L711.3 797.6 M727.5 790.4 L715.5 789.3 L711.1 788.5 M1162 162 L1237 150 M1191 161 L1215 215 L1238 277 M1162 199 L1218 175 L1237 168 M1162 275 L1200 258 L1237 240 M1180 215 L1230 240 M785 742 V805 M755 749 L785 748 M768 757 L785 752 M880 766 H1075 M1162 488 H1197 M1080 775 L1150 760 M1162 700 L1237 660 " stroke="#b8bddc" stroke-width="0.9" fill="none"/><ellipse cx="1178" cy="182" rx="3" ry="2.5" fill="#e3e4e0"/><ellipse cx="1200" cy="188" rx="2.5" ry="2" fill="#e3e4e0"/><ellipse cx="1216" cy="192" rx="3.5" ry="2.5" fill="#e3e4e0"/><ellipse cx="1226" cy="206" rx="2" ry="2" fill="#e3e4e0"/><ellipse cx="1182" cy="207" rx="4.5" ry="3.5" fill="#e3e4e0"/><ellipse cx="1218" cy="216" rx="3" ry="2.5" fill="#e3e4e0"/><ellipse cx="1206" cy="236" rx="4" ry="3" fill="#e3e4e0"/><ellipse cx="1226" cy="246" rx="2.5" ry="2.5" fill="#e3e4e0"/><ellipse cx="1186" cy="262" rx="4" ry="2.5" fill="#e3e4e0"/><ellipse cx="1231" cy="190" rx="3" ry="3" fill="#e3e4e0"/><ellipse cx="1197" cy="212" rx="2.5" ry="2" fill="#e3e4e0"/><ellipse cx="1210" cy="160" rx="4" ry="3" fill="#e3e4e0"/><path d="M866 780 L895 765 L931 759 L949 749 L951 742" stroke="#b3b7d3" stroke-width="8" fill="none"/><path d="M866 780 L895 765 L931 759 L949 749 L951 742" stroke="#dfe0ea" stroke-width="1.5" fill="none"/><path d="M560 742 L556 770 L555 805" stroke="#c0c4dc" stroke-width="5" fill="none"/><path d="M1162 139 Q1180 132 1190 129 Q1210 125 1237 132" stroke="#a8ccf6" stroke-width="6.5" fill="none"/><path d="M1188 131 Q1198 110 1210 102 Q1222 98 1237 92" stroke="#a8ccf6" stroke-width="4.5" fill="none"/><path d="M1162 296 Q1195 297 1215 312 Q1228 322 1237 330" stroke="#a8ccf6" stroke-width="7" fill="none"/><path d="M1234 330 Q1228 360 1232 400 L1234 450" stroke="#a8ccf6" stroke-width="7" fill="none"/><path d="M1236 440 Q1224 480 1221 507 Q1212 530 1208 560 L1206 605 Q1195 632 1180 660 L1162 676" stroke="#a8ccf6" stroke-width="6.5" fill="none"/><path d="M733 742 Q738 760 755 774 Q772 788 776 805" stroke="#a8ccf6" stroke-width="8" fill="none"/><path d="M860 745 Q880 756 904 759 Q922 752 928 742" stroke="#a8ccf6" stroke-width="7" fill="none"/><path d="M1144 742 Q1150 755 1163 766 Q1165 778 1152 784 Q1135 780 1129 789 L1128 805" stroke="#a8ccf6" stroke-width="4" fill="none"/><path d="M1161 805 Q1181 795 1201 805" stroke="#a8ccf6" stroke-width="5" fill="none"/><path d="M1162 775 Q1172 785 1175 805" stroke="#a8ccf6" stroke-width="6" fill="none"/><path d="M1181 37 Q1175 55 1162 62" stroke="#c9cbd6" stroke-width="5.5" fill="none" stroke-linejoin="round"/><path d="M1162 74 L1174 82 L1162 101" stroke="#c9cbd6" stroke-width="5.5" fill="none" stroke-linejoin="round"/><path d="M1237 337 L1183 396 L1162 415" stroke="#c9cbd6" stroke-width="5.5" fill="none" stroke-linejoin="round"/><path d="M1162 372 L1174 379 L1183 396" stroke="#c9cbd6" stroke-width="5.5" fill="none" stroke-linejoin="round"/><path d="M1198 450 L1197 540 L1195 590 L1183 612 L1162 630" stroke="#c9cbd6" stroke-width="5.5" fill="none" stroke-linejoin="round"/><path d="M1162 550 Q1180 544 1195 544 Q1215 546 1237 553" stroke="#c9cbd6" stroke-width="5.5" fill="none" stroke-linejoin="round"/><path d="M1237 535 L1220 605 L1214 643 L1194 668" stroke="#c9cbd6" stroke-width="5.5" fill="none" stroke-linejoin="round"/><path d="M1162 644 L1194 668 L1162 687" stroke="#c9cbd6" stroke-width="5.5" fill="none" stroke-linejoin="round"/><path d="M1194 668 L1193 700 L1204 726 L1237 765" stroke="#c9cbd6" stroke-width="5.5" fill="none" stroke-linejoin="round"/><path d="M1087 742 V753 L1128 750 V780" stroke="#c9cbd6" stroke-width="5.5" fill="none" stroke-linejoin="round"/><path d="M1207 742 L1237 765" stroke="#c9cbd6" stroke-width="5.5" fill="none" stroke-linejoin="round"/><path d="M975 742 L965 761 V786 L970 805" stroke="#c9cbd6" stroke-width="5.5" fill="none" stroke-linejoin="round"/><path d="M943 797 L984 784 L1011 795 L1038 800 L1040 805" stroke="#c9cbd6" stroke-width="5.5" fill="none" stroke-linejoin="round"/><path d="M1004 742 L1006 752 L1016 758 L1013 791 L1010 805" stroke="#c9cbd6" stroke-width="5.5" fill="none" stroke-linejoin="round"/><path d="M1020 742 L1036 756 L1043 742 M1036 756 L1037 805" stroke="#c9cbd6" stroke-width="5.5" fill="none" stroke-linejoin="round"/><path d="M560 773 L620 770 Q628 760 625 742" stroke="#c9cbd6" stroke-width="5.5" fill="none" stroke-linejoin="round"/><path d="M627 742 L630 790 L660 805" stroke="#c9cbd6" stroke-width="5.5" fill="none" stroke-linejoin="round"/><path d="M632 796 Q645 772 665 772 Q690 775 695 805" stroke="#c9cbd6" stroke-width="5.5" fill="none" stroke-linejoin="round"/><path d="M1181 37 Q1175 55 1162 62" stroke="#ffffff" stroke-width="3.5" fill="none" stroke-linejoin="round"/><path d="M1162 74 L1174 82 L1162 101" stroke="#ffffff" stroke-width="3.5" fill="none" stroke-linejoin="round"/><path d="M1237 337 L1183 396 L1162 415" stroke="#ffffff" stroke-width="3.5" fill="none" stroke-linejoin="round"/><path d="M1162 372 L1174 379 L1183 396" stroke="#ffffff" stroke-width="3.5" fill="none" stroke-linejoin="round"/><path d="M1198 450 L1197 540 L1195 590 L1183 612 L1162 630" stroke="#ffffff" stroke-width="3.5" fill="none" stroke-linejoin="round"/><path d="M1162 550 Q1180 544 1195 544 Q1215 546 1237 553" stroke="#ffffff" stroke-width="3.5" fill="none" stroke-linejoin="round"/><path d="M1237 535 L1220 605 L1214 643 L1194 668" stroke="#ffffff" stroke-width="3.5" fill="none" stroke-linejoin="round"/><path d="M1162 644 L1194 668 L1162 687" stroke="#ffffff" stroke-width="3.5" fill="none" stroke-linejoin="round"/><path d="M1194 668 L1193 700 L1204 726 L1237 765" stroke="#ffffff" stroke-width="3.5" fill="none" stroke-linejoin="round"/><path d="M1087 742 V753 L1128 750 V780" stroke="#ffffff" stroke-width="3.5" fill="none" stroke-linejoin="round"/><path d="M1207 742 L1237 765" stroke="#ffffff" stroke-width="3.5" fill="none" stroke-linejoin="round"/><path d="M975 742 L965 761 V786 L970 805" stroke="#ffffff" stroke-width="3.5" fill="none" stroke-linejoin="round"/><path d="M943 797 L984 784 L1011 795 L1038 800 L1040 805" stroke="#ffffff" stroke-width="3.5" fill="none" stroke-linejoin="round"/><path d="M1004 742 L1006 752 L1016 758 L1013 791 L1010 805" stroke="#ffffff" stroke-width="3.5" fill="none" stroke-linejoin="round"/><path d="M1020 742 L1036 756 L1043 742 M1036 756 L1037 805" stroke="#ffffff" stroke-width="3.5" fill="none" stroke-linejoin="round"/><path d="M560 773 L620 770 Q628 760 625 742" stroke="#ffffff" stroke-width="3.5" fill="none" stroke-linejoin="round"/><path d="M627 742 L630 790 L660 805" stroke="#ffffff" stroke-width="3.5" fill="none" stroke-linejoin="round"/><path d="M632 796 Q645 772 665 772 Q690 775 695 805" stroke="#ffffff" stroke-width="3.5" fill="none" stroke-linejoin="round"/><text x="1188" y="253" font-family="Liberation Sans" font-size="10.5" fill="#555" font-style="italic" stroke="#fff" stroke-width="2.5" paint-order="stroke" stroke-linejoin="round">Valakupiai</text><text x="1173" y="270" font-family="Liberation Sans" font-size="8.6" fill="#333" transform="rotate(22 1174 272)" stroke="#fff" stroke-width="2.5" paint-order="stroke" stroke-linejoin="round">Vadilutės g.</text><text x="1160" y="497" font-family="Liberation Sans" font-size="11.5" fill="#555" font-style="italic" stroke="#fff" stroke-width="2.5" paint-order="stroke" stroke-linejoin="round">ūnai</text><text x="1232" y="556" font-family="Liberation Sans" font-size="12.5" fill="#555" font-style="italic" stroke="#fff" stroke-width="2.5" paint-order="stroke" stroke-linejoin="round">A</text><text x="1212" y="568" font-family="Liberation Sans" font-size="10" fill="#3a6ed8" font-style="italic" transform="rotate(-75 1204 568)" stroke="#fff" stroke-width="2.5" paint-order="stroke" stroke-linejoin="round">Neris</text><text x="1163" y="613" font-family="Liberation Sans" font-size="9.6" fill="#3a6ed8" font-style="italic" stroke="#fff" stroke-width="2.5" paint-order="stroke" stroke-linejoin="round">varo pietinio tvenkinys</text><text x="1192" y="710" font-family="Liberation Sans" font-size="9.3" fill="#333" transform="rotate(62 1193 712)" stroke="#fff" stroke-width="2.5" paint-order="stroke" stroke-linejoin="round">Olandų g.</text><text x="1076" y="795" font-family="Liberation Sans" font-size="11" fill="#555" font-style="italic" stroke="#fff" stroke-width="2.5" paint-order="stroke" stroke-linejoin="round">Senamiestis</text><text x="937" y="804" font-family="Liberation Sans" font-size="11" fill="#555" font-style="italic" stroke="#fff" stroke-width="2.5" paint-order="stroke" stroke-linejoin="round">Naujamiestis</text><text x="736" y="801" font-family="Liberation Sans" font-size="10" fill="#333" stroke="#fff" stroke-width="2.5" paint-order="stroke" stroke-linejoin="round">Šaltūnai</text><text x="868" y="803" font-family="Liberation Sans" font-size="9" fill="#333" transform="rotate(-72 867 803)" stroke="#fff" stroke-width="2.5" paint-order="stroke" stroke-linejoin="round">Vilko g.</text><text x="636" y="756" font-family="Liberation Sans" font-size="9.5" fill="#333" transform="rotate(72 641 765)" stroke="#fff" stroke-width="2.5" paint-order="stroke" stroke-linejoin="round">Laisvės pr.</text><text x="546" y="42" font-family="Liberation Sans" font-size="10" fill="#333" stroke="#fff" stroke-width="2.5" paint-order="stroke" stroke-linejoin="round">Tarande</text><text x="1163" y="52" font-family="Liberation Sans" font-size="10" fill="#3a6ed8" font-style="italic" transform="rotate(-62 1163 52)" stroke="#fff" stroke-width="2.5" paint-order="stroke" stroke-linejoin="round">Ke</text><text x="551" y="745" font-family="Liberation Sans" font-size="9.5" fill="#333" transform="rotate(80 551 745)" stroke="#fff" stroke-width="2.5" paint-order="stroke" stroke-linejoin="round">Karinių aplinkkelis</text><path d="M546 742 V774 M546 752.5 H638.5 M638.5 742 V752.5 M603 752.5 V774" stroke="#000" stroke-width="2" fill="none"/><text x="558.5" y="767" font-family="Liberation Sans" font-size="10.5" fill="#111" font-weight="bold" stroke="#fff" stroke-width="2.5" paint-order="stroke" stroke-linejoin="round">2000 ft</text><text x="575" y="745" font-family="Liberation Sans" font-size="10.5" fill="#111" font-weight="bold" stroke="#fff" stroke-width="2.5" paint-order="stroke" stroke-linejoin="round">1000 ft</text><text x="545" y="787" font-family="Liberation Sans" font-size="10.2" fill="#222" font-weight="bold" textLength="138" lengthAdjust="spacingAndGlyphs" stroke="#fff" stroke-width="2.5" paint-order="stroke" stroke-linejoin="round">© OpenStreetMap contributors</text><text x="1081" y="787.2" font-family="Liberation Sans" font-size="10.3" fill="#2a3040" font-weight="bold" textLength="144" lengthAdjust="spacingAndGlyphs" stroke="#fff" stroke-width="2.5" paint-order="stroke" stroke-linejoin="round">N 54° 43.2525' : E 025° 12.6630'</text></svg><div class="a" style="left:0;top:0;width:9px;height:768px;background:linear-gradient(to right, rgba(0,0,0,0.13), rgba(0,0,0,0))"></div><div class="a" style="left:656px;top:357px;width:28px;height:57px;background:#fff;border-radius:5px;box-shadow:0 1px 4px rgba(0,0,0,0.2)"></div><div class="a" style="left:656px;top:385px;width:28px;height:1px;background:#e0e0e0"></div><svg style="left:656px;top:357px" width="28" height="57" viewBox="0 0 28 57"><path d="M14 7.2 V20.8 M7.2 14 H20.8" stroke="#4d5263" stroke-width="2.6"/><path d="M7.5 43 H20.5" stroke="#4d5263" stroke-width="3.2"/></svg></div><div class="a" style="left:138px;top:37px;width:1099px;height:1px;background:rgba(84,90,104,0.8)"></div><div class="a" style="left:138px;top:805px;width:1099px;height:37px;background:#fff;border-top:1px solid #dfe1e6;border-radius:0 0 2px 2px"></div><div class="a" style="left:373px;top:2px;width:115px;height:35px;background:#3e4555"></div><svg style="left:0;top:0" width="220" height="40" viewBox="0 0 220 40"><path d="M189.00 8.20 L188.10 8.25 L187.21 8.37 L186.33 8.57 L185.47 8.85 L184.65 9.20 L183.86 9.61 L183.11 10.08 L182.40 10.62 L181.75 11.21 L181.15 11.85 L180.60 12.53 L180.12 13.25 L179.71 14.00 L179.36 14.79 L179.07 15.59 L178.86 16.40 L178.71 17.23 L178.64 18.06 L178.63 18.88 L178.70 19.70 L178.82 20.50 L179.02 21.28 L179.27 22.04 L179.58 22.76 L180.35 22.51 L180.25 21.80 L180.22 21.09 L180.23 20.39 L180.30 19.70 L180.43 19.03 L180.60 18.37 L180.81 17.73 L181.07 17.12 L181.37 16.54 L181.72 15.99 L182.09 15.47 L182.51 14.98 L182.95 14.53 L183.42 14.12 L183.91 13.74 L184.43 13.41 L184.96 13.12 L185.52 12.86 L186.08 12.65 L186.65 12.48 L187.24 12.35 L187.82 12.26 L188.41 12.21 L189.00 12.20 Z" fill="#f2463a"/><circle cx="189.00" cy="10.20" r="2.00" fill="#f2463a"/><path d="M179.04 25.45 L179.55 26.24 L180.13 26.97 L180.77 27.65 L181.47 28.27 L182.21 28.82 L183.00 29.30 L183.82 29.72 L184.67 30.06 L185.55 30.32 L186.44 30.51 L187.34 30.61 L188.23 30.65 L189.13 30.60 L190.01 30.48 L190.87 30.28 L191.70 30.02 L192.50 29.68 L193.27 29.28 L193.99 28.82 L194.66 28.31 L195.28 27.74 L195.85 27.13 L196.36 26.48 L196.80 25.80 L196.17 25.30 L195.61 25.80 L195.03 26.24 L194.41 26.63 L193.78 26.96 L193.13 27.25 L192.46 27.47 L191.79 27.65 L191.11 27.76 L190.43 27.83 L189.76 27.84 L189.09 27.80 L188.44 27.71 L187.80 27.57 L187.18 27.38 L186.58 27.15 L186.00 26.88 L185.45 26.56 L184.93 26.21 L184.44 25.82 L183.99 25.40 L183.56 24.95 L183.18 24.47 L182.82 23.97 L182.50 23.45 Z" fill="#f2463a"/><circle cx="180.77" cy="24.45" r="2.00" fill="#f2463a"/><path d="M198.96 25.45 L199.38 24.63 L199.72 23.78 L199.99 22.90 L200.17 22.01 L200.28 21.10 L200.32 20.19 L200.27 19.29 L200.15 18.40 L199.95 17.52 L199.68 16.67 L199.35 15.85 L198.94 15.06 L198.48 14.32 L197.96 13.62 L197.38 12.97 L196.76 12.38 L196.09 11.85 L195.39 11.38 L194.65 10.97 L193.89 10.63 L193.11 10.36 L192.32 10.15 L191.52 10.02 L190.72 9.95 L190.58 10.74 L191.26 11.00 L191.92 11.30 L192.54 11.65 L193.13 12.05 L193.67 12.48 L194.18 12.95 L194.64 13.45 L195.06 13.98 L195.44 14.53 L195.76 15.11 L196.04 15.70 L196.28 16.31 L196.46 16.92 L196.59 17.55 L196.68 18.17 L196.72 18.80 L196.72 19.42 L196.67 20.03 L196.57 20.64 L196.43 21.24 L196.26 21.81 L196.04 22.38 L195.78 22.92 L195.50 23.45 Z" fill="#3a6ef5"/><circle cx="197.23" cy="24.45" r="2.00" fill="#3a6ef5"/></svg><svg style="left:0;top:0" width="400" height="40" viewBox="0 0 400 40"><path d="M210 15.7 V23 A4.45 4.45 0 0 0 218.9 23 V15.7 M218.9 23 A4.35 4.35 0 0 0 227.6 23 V15.7 M232 16.5 V27.5 M235.4 22.8 V20.3 A4.85 4.85 0 0 1 245.1 20.3 V27.5 M249.3 11.8 V27.5 M265.9 27.3 V20 A4.35 4.35 0 0 1 274.6 20 V27.3 M281.1 12.4 V25 Q281.1 27.3 284.3 27.3 M324.3 12.4 V25 Q324.3 27.2 327.3 27.2 M316.2 16.4 V27.3 M304.4 17.6 A4.4 5.3 0 1 0 304.4 25.4" stroke="#fff" stroke-width="1.9" fill="none"/><ellipse cx="257.7" cy="21.5" rx="4.3" ry="5.1" stroke="#fff" stroke-width="1.9" fill="none"/><ellipse cx="290.2" cy="21.45" rx="4.4" ry="5.3" stroke="#fff" stroke-width="1.9" fill="none"/><ellipse cx="311.8" cy="21.45" rx="4.4" ry="5.3" stroke="#fff" stroke-width="1.9" fill="none"/><rect x="231" y="11.8" width="2" height="2.1" fill="#fff"/><rect x="239" y="22.8" width="2.7" height="4.7" fill="#fff"/></svg><svg style="left:329px;top:7px;" width="8" height="8" viewBox="0 0 8 8"><path d="M1 1.5 A5 5 0 0 1 5.5 6" stroke="#fff" stroke-width="1.8" fill="none"/><rect x="0.8" y="4.3" width="1.8" height="1.8" fill="#fff"/></svg><svg style="left:381px;top:11px;" width="16" height="16" viewBox="0 0 16 16"><circle cx="8" cy="8" r="7.2" fill="none" stroke="#fff" stroke-width="1.6"/><path d="M3.5 4 L6 3.5 L7 5.5 L5.5 7.5 L6.5 9.5 L5.5 12.5 L3.8 10 L2.5 7 Z" fill="#fff"/><path d="M9 2.5 L12 3.5 L11 5 L9 5 Z M9.5 8 L13.5 8.5 L12.5 12 L10 13 Z" fill="#fff"/></svg><div class="t" style="left:402px;top:12.05px;font-size:14px;color:#ffffff;font-weight:normal;-webkit-text-stroke:0.3px #fff">Seguimiento</div><svg style="left:496px;top:10px;" width="16" height="18" viewBox="0 0 16 18"><rect x="1.5" y="2.5" width="13" height="14" rx="1" fill="none" stroke="#fff" stroke-width="1.6"/><rect x="5" y="0.8" width="6" height="3" fill="#fff"/><rect x="4" y="10" width="2" height="4.5" fill="#fff"/><rect x="7" y="7" width="2" height="7.5" fill="#fff"/><rect x="10" y="9" width="2" height="5.5" fill="#fff"/></svg><div class="t" style="left:517px;top:12.05px;font-size:14px;color:#ffffff;font-weight:normal;-webkit-text-stroke:0.3px #fff">Informes</div><svg style="left:587px;top:10px;" width="18" height="18" viewBox="0 0 18 18"><path d="M3 3 L13 3 L16 10 L9 16 L2 10 Z" fill="none" stroke="#fff" stroke-width="1.5"/><rect x="1.2" y="1.2" width="3.6" height="3.6" fill="#5c6270" stroke="#fff" stroke-width="1.3"/><rect x="11.2" y="1.2" width="3.6" height="3.6" fill="#5c6270" stroke="#fff" stroke-width="1.3"/><rect x="14.2" y="8.2" width="3.6" height="3.6" fill="#5c6270" stroke="#fff" stroke-width="1.3"/><rect x="7.2" y="14.2" width="3.6" height="3.6" fill="#5c6270" stroke="#fff" stroke-width="1.3"/><rect x="0.2" y="8.2" width="3.6" height="3.6" fill="#5c6270" stroke="#fff" stroke-width="1.3"/></svg><div class="t" style="left:609.5px;top:12.05px;font-size:14px;color:#ffffff;font-weight:normal;-webkit-text-stroke:0.3px #fff">Geocercas</div><svg style="left:691px;top:10px;" width="19" height="19" viewBox="0 0 19 19"><circle cx="9.5" cy="9.5" r="7.6" fill="none" stroke="#fff" stroke-width="1.7"/><path d="M2 7.6 Q9.5 6.6 17 7.6 L17 9.6 Q9.5 8.8 2 9.6 Z" fill="#fff"/><path d="M7.3 9 H11.7 V12.5 H7.3 Z" fill="#fff"/><path d="M7.8 12 L4.5 15.5 M11.2 12 L14.5 15.5 M6.5 13.5 H12.5" stroke="#fff" stroke-width="1.6"/><circle cx="9.5" cy="10.6" r="0.9" fill="#5c6270"/></svg><div class="t" style="left:713px;top:12.05px;font-size:14px;color:#ffffff;font-weight:normal;-webkit-text-stroke:0.3px #fff">Conductores</div><svg style="left:808px;top:10px;" width="18" height="18" viewBox="0 0 18 18"><circle cx="9" cy="10" r="6.6" fill="none" stroke="#fff" stroke-width="1.7"/><path d="M9 6.5 V10.5 L11.5 12" stroke="#fff" stroke-width="1.5" fill="none"/><path d="M1.5 4.5 L4.5 1.5 M16.5 4.5 L13.5 1.5" stroke="#fff" stroke-width="1.8"/><path d="M5 16 L3.5 17.5 M13 16 L14.5 17.5" stroke="#fff" stroke-width="1.5"/></svg><div class="t" style="left:830px;top:12.05px;font-size:14px;color:#ffffff;font-weight:normal;-webkit-text-stroke:0.3px #fff">Notificaciones</div><svg style="left:1088px;top:11px;" width="18" height="18" viewBox="0 0 18 18"><rect x="0.40" y="0.50" width="4.6" height="4.6" fill="#fff"/><rect x="2.00" y="2.10" width="1.4" height="1.4" fill="#5c6270"/><rect x="6.40" y="0.50" width="4.6" height="4.6" fill="#fff"/><rect x="8.00" y="2.10" width="1.4" height="1.4" fill="#5c6270"/><rect x="12.40" y="0.50" width="4.6" height="4.6" fill="#fff"/><rect x="0.40" y="6.40" width="4.6" height="4.6" fill="#fff"/><rect x="6.40" y="6.40" width="4.6" height="4.6" fill="#fff"/><rect x="8.00" y="8.00" width="1.4" height="1.4" fill="#5c6270"/><rect x="12.40" y="6.40" width="4.6" height="4.6" fill="#fff"/><rect x="14.00" y="8.00" width="1.4" height="1.4" fill="#5c6270"/><rect x="0.40" y="12.30" width="4.6" height="4.6" fill="#fff"/><rect x="6.40" y="12.30" width="4.6" height="4.6" fill="#fff"/><rect x="12.40" y="12.30" width="4.6" height="4.6" fill="#fff"/><rect x="14.00" y="13.90" width="1.4" height="1.4" fill="#5c6270"/></svg><svg style="left:1128px;top:12px;" width="6" height="16" viewBox="0 0 6 16"><circle cx="3" cy="2.6" r="1.7" fill="#fff"/><circle cx="3" cy="7.7" r="1.7" fill="#fff"/><circle cx="3" cy="12.8" r="1.7" fill="#fff"/></svg><svg style="left:1157px;top:11px;" width="17" height="19" viewBox="0 0 17 19"><circle cx="8.5" cy="5.5" r="4.4" fill="none" stroke="#fff" stroke-width="1.6"/><path d="M1.2 17 Q1.5 10.5 8.5 10.5 Q15.5 10.5 15.8 17" fill="none" stroke="#fff" stroke-width="1.6"/><path d="M5 15 H10 M8 12.5 L11 15 L8 17.5" stroke="#fff" stroke-width="1.8" fill="none"/></svg><div class="t" style="left:1190px;top:12.05px;font-size:14px;color:#ffffff;font-weight:normal;-webkit-text-stroke:0.3px #fff">user</div><div class="a" style="left:150px;top:46px;width:335px;height:28px;border:1px solid #dcdfe4;border-radius:4px;background:#fff"></div><svg style="left:161px;top:53px;" width="14" height="14" viewBox="0 0 14 14"><circle cx="5" cy="5" r="4.2" fill="none" stroke="#5d6270" stroke-width="1"/><path d="M8 8 L12 12" stroke="#5d6270" stroke-width="1.2"/></svg><div class="t" style="left:181px;top:53.15px;font-size:14px;color:#cdd0d4;font-weight:normal;">Buscar</div><div class="a" style="left:489px;top:43px;width:35px;height:34px;border:2px solid #5ad2ea;border-radius:4px;background:#fff"></div><div class="a" style="left:492px;top:46px;width:29px;height:28px;background:#e9effc;border-radius:3px"></div><svg style="left:504px;top:53px;" width="6" height="14" viewBox="0 0 6 14"><circle cx="3" cy="2.4" r="1.4" fill="#4a7df2"/><circle cx="3" cy="6.9" r="1.4" fill="#4a7df2"/><circle cx="3" cy="11.3" r="1.4" fill="#4a7df2"/></svg><div class="a" style="left:138px;top:82px;width:387px;height:1px;background:#e3e5e9"></div><div class="a" style="left:138px;top:125px;width:387px;height:1px;background:#e3e5e9"></div><div class="a" style="left:145px;top:99px;width:12px;height:12px;background:#4a8cf6;border-radius:2px"></div><div class="a" style="left:148.5px;top:102.5px;width:5px;height:5px;background:#fff;border-radius:1px"></div><div class="a" style="left:163px;top:90px;width:28px;height:28px;background:#4d8ef5;border-radius:4px"></div><svg style="left:163px;top:90px;" width="28" height="28" viewBox="0 0 28 28"><path d="M14 7 V21 M7 14 H21" stroke="#fff" stroke-width="2.6"/></svg><div class="a" style="left:195px;top:90px;width:28px;height:28px;border:1px solid #dcdfe4;border-radius:4px;background:#fff"></div><div class="a" style="left:227px;top:90px;width:30px;height:28px;border:1px solid #dcdfe4;border-radius:4px;background:#fff"></div><div class="a" style="left:261px;top:90px;width:28px;height:28px;border:1px solid #dcdfe4;border-radius:4px;background:#fff"></div><svg style="left:195px;top:90px;" width="28" height="28" viewBox="0 0 28 28"><path d="M8.2 12.5 A6 6 0 0 1 19.5 11.5" stroke="#4d8ef5" stroke-width="1.6" fill="none"/><path d="M19.8 15.5 A6 6 0 0 1 8.5 16.5" stroke="#4d8ef5" stroke-width="1.6" fill="none"/><path d="M17 11 L20.8 12.8 L21.5 8.8 Z" fill="#4d8ef5"/><path d="M11 17 L7.2 15.2 L6.5 19.2 Z" fill="#4d8ef5"/></svg><svg style="left:227px;top:90px;" width="30" height="28" viewBox="0 0 30 28"><path d="M8 9.6 H21 M12.4 9.6 V17.6 H21 M12.4 13.7 H21" stroke="#4a5060" stroke-width="1.3" fill="none"/></svg><div class="t" style="left:267.2px;top:98.2px;font-size:10.6px;color:#4d8ef5;font-weight:bold">A</div><svg style="left:261px;top:90px;" width="28" height="28" viewBox="0 0 28 28"><path d="M19 9.3 V18 M15 13.5 L19 18 L23 13.5" stroke="#4a5060" stroke-width="1.3" fill="none"/></svg><svg style="left:340px;top:96px;" width="18" height="18" viewBox="0 0 18 18"><circle cx="8.7" cy="8.2" r="6.6" fill="none" stroke="#414757" stroke-width="1.3"/><circle cx="8.7" cy="8.2" r="1.2" fill="#414757"/><path d="M8.7 0 V3.5 M8.7 13 V16.5 M0.5 8.2 H4 M13.5 8.2 H17" stroke="#414757" stroke-width="1.3"/></svg><svg style="left:368px;top:96px;" width="17" height="17" viewBox="0 0 17 17"><circle cx="8.5" cy="8" r="7" fill="none" stroke="#414757" stroke-width="1.3"/><path d="M4.5 6.6 H8.5 V4 L12.5 8 L8.5 12 V9.4 H4.5 Z" fill="#414757"/></svg><svg style="left:394px;top:94px;" width="20" height="20" viewBox="0 0 20 20"><path d="M4.3 7.1 A6 6 0 0 0 12.8 15.4 Z" fill="none" stroke="#414757" stroke-width="1.2" stroke-linejoin="round"/><path d="M8.5 11.2 L10.4 9.4" stroke="#414757" stroke-width="1.5"/><path d="M8 5.3 A5.6 5.6 0 0 1 14.5 11.8 M7.1 3.1 A8.2 8.2 0 0 1 17 12.6" stroke="#414757" stroke-width="1.2" fill="none"/></svg><svg style="left:425px;top:96px;" width="16" height="17" viewBox="0 0 16 17"><rect x="2.5" y="1" width="10" height="9" fill="none" stroke="#414757" stroke-width="1.3"/><path d="M7.5 10 V13" stroke="#414757" stroke-width="1.3"/><rect x="0.8" y="13" width="14" height="2.8" fill="none" stroke="#414757" stroke-width="1.2"/><rect x="6" y="12" width="3" height="3" fill="#414757"/></svg><svg style="left:453.8px;top:96.5px;" width="16" height="16" viewBox="0 0 16 16"><path d="M3.5 3.5 L10.7 10.7" stroke="#414757" stroke-width="2.6"/><circle cx="3.6" cy="3.6" r="3.1" fill="#414757"/><circle cx="10.6" cy="10.6" r="3.1" fill="#414757"/><circle cx="1.8" cy="1.8" r="1.7" fill="#fff"/><path d="M1.8 1.8 L-1 -1" stroke="#fff" stroke-width="3"/><circle cx="12.4" cy="12.4" r="1.7" fill="#fff"/><path d="M12.4 12.4 L15 15" stroke="#fff" stroke-width="3"/></svg><svg style="left:482px;top:95px;" width="16" height="18" viewBox="0 0 16 18"><rect x="1" y="2.8" width="13.8" height="14" rx="1.2" fill="none" stroke="#414757" stroke-width="1.2"/><path d="M5 2.8 L7.9 0.6 L10.8 2.8" fill="none" stroke="#414757" stroke-width="1.2"/><path d="M4 7.5 H11.8 M4 10.3 H11.8 M4 13.1 H11.8" stroke="#414757" stroke-width="1.2"/></svg><svg style="left:511px;top:99px;" width="11" height="11" viewBox="0 0 11 11"><path d="M1.2 1.2 L9.8 9.8 M9.8 1.2 L1.2 9.8" stroke="#f23b2f" stroke-width="2.4"/></svg><div class="a" style="left:163px;top:134px;width:342px;height:49px;background:#f5f5f6;border-radius:4px"></div><div class="a" style="left:145px;top:153px;width:12px;height:12px;background:#4a8cf6;border-radius:2px"></div><svg style="left:145px;top:153px;" width="12" height="12" viewBox="0 0 12 12"><path d="M2.8 6.2 L5 8.4 L9.4 3.8" stroke="#fff" stroke-width="1.8" fill="none"/></svg><svg style="left:176px;top:138.5px;" width="14" height="19" viewBox="0 0 14 19"><rect x="2.2" y="0.6" width="9.6" height="17.8" rx="3.2" fill="#e8453c"/><rect x="3.5" y="4.6" width="7" height="10.8" rx="2" fill="#2c3038"/><rect x="4.4" y="8" width="5.2" height="4" rx="1.2" fill="#f2dcd6"/><rect x="0.6" y="6.2" width="2.2" height="1.8" fill="#e8453c"/><rect x="11.2" y="6.2" width="2.2" height="1.8" fill="#e8453c"/></svg><div class="t" style="left:206px;top:141.15px;font-size:14px;color:#2b2f3a;font-weight:normal;">Astrocar</div><div class="t" style="left:206px;top:163.14px;font-size:12px;color:#7a7e87;width:126px;overflow:hidden;text-overflow:ellipsis;letter-spacing:-0.3px">Gedvydžių g., 14, Vilnius, Lietuva</div><svg style="left:340px;top:150.5px;" width="18" height="18" viewBox="0 0 18 18"><circle cx="9.3" cy="9" r="5.9" fill="none" stroke="#414757" stroke-width="1.7"/><path d="M9.3 1 V4 M9.3 14 V17 M1 9 H4 M14.6 9 H17.6" stroke="#414757" stroke-width="1.8"/></svg><svg style="left:369px;top:149.5px;" width="20" height="20" viewBox="0 0 20 20"><circle cx="11" cy="10.9" r="7.4" fill="#4caf50"/><circle cx="4.7" cy="3" r="3.4" fill="#f5f5f6"/><path d="M6.1 9.5 H11.5 V7.2 L16.6 10.9 L11.5 14.6 V12.3 H6.1 Z" fill="#fff"/><circle cx="4.8" cy="2.9" r="1.9" fill="none" stroke="#4caf50" stroke-width="1.3"/><path d="M3.4 4.3 L0.8 6.6" stroke="#4caf50" stroke-width="1.4"/></svg><div class="a" style="left:399.3px;top:152.0px;width:5px;height:13.8px;background:#4caf50"></div><div class="a" style="left:407.7px;top:152.0px;width:5px;height:13.8px;background:#4caf50"></div><svg style="left:430px;top:154.5px;" width="10" height="10" viewBox="0 0 10 10"><circle cx="5" cy="4.5" r="4" fill="#4caf50"/></svg><svg style="left:457px;top:154.5px;" width="16" height="16" viewBox="0 0 16 16"><g transform="scale(0.98)"><path d="M5.6 5.6 L11.3 11.3" stroke="#414757" stroke-width="3" stroke-linecap="round"/><circle cx="4.4" cy="4.4" r="3.6" fill="#414757"/><path d="M2.2 2.2 L0 4.4 L2.2 6.6 M2.2 2.2 L4.4 0" stroke="none"/><circle cx="2.4" cy="2.4" r="1.9" fill="#f5f5f6"/><path d="M2.4 2.4 L-1 -1" stroke="#f5f5f6" stroke-width="3"/></g></svg><svg style="left:482px;top:150.5px;" width="18" height="18" viewBox="0 0 18 18"><circle cx="8.5" cy="8.8" r="7.1" fill="none" stroke="#414757" stroke-width="1.2"/><path d="M5.8 7.4 H11.2 L8.5 10.6 Z" fill="#414757"/></svg><div class="a" style="left:163px;top:185px;width:342px;height:49px;background:#f5f5f6;border-radius:4px"></div><div class="a" style="left:145px;top:204px;width:12px;height:12px;background:#4a8cf6;border-radius:2px"></div><svg style="left:145px;top:204px;" width="12" height="12" viewBox="0 0 12 12"><path d="M2.8 6.2 L5 8.4 L9.4 3.8" stroke="#fff" stroke-width="1.8" fill="none"/></svg><svg style="left:176px;top:189.5px;" width="14" height="19" viewBox="0 0 14 19"><rect x="2.2" y="0.6" width="9.6" height="17.8" rx="3.2" fill="#f0a92a"/><rect x="3.5" y="4.6" width="7" height="10.8" rx="2" fill="#2c3038"/><rect x="4.4" y="8" width="5.2" height="4" rx="1.2" fill="#f2dcd6"/><rect x="0.6" y="6.2" width="2.2" height="1.8" fill="#f0a92a"/><rect x="11.2" y="6.2" width="2.2" height="1.8" fill="#f0a92a"/></svg><div class="t" style="left:206px;top:192.15px;font-size:14px;color:#2b2f3a;font-weight:normal;">Bentley</div><div class="t" style="left:206px;top:214.14px;font-size:12px;color:#7a7e87;width:126px;overflow:hidden;text-overflow:ellipsis;letter-spacing:-0.3px">Ozo g., 14A, Vilnius, Lietuva</div><svg style="left:340px;top:201.5px;" width="18" height="18" viewBox="0 0 18 18"><circle cx="9.3" cy="9" r="5.9" fill="none" stroke="#414757" stroke-width="1.7"/><path d="M9.3 1 V4 M9.3 14 V17 M1 9 H4 M14.6 9 H17.6" stroke="#414757" stroke-width="1.8"/></svg><svg style="left:369px;top:200.5px;" width="20" height="20" viewBox="0 0 20 20"><circle cx="11" cy="10.9" r="7.4" fill="#4caf50"/><circle cx="4.7" cy="3" r="3.4" fill="#f5f5f6"/><path d="M6.1 9.5 H11.5 V7.2 L16.6 10.9 L11.5 14.6 V12.3 H6.1 Z" fill="#fff"/><circle cx="4.8" cy="2.9" r="1.9" fill="none" stroke="#4caf50" stroke-width="1.3"/><path d="M3.4 4.3 L0.8 6.6" stroke="#4caf50" stroke-width="1.4"/></svg><div class="a" style="left:399.3px;top:203.0px;width:5px;height:13.8px;background:#4caf50"></div><div class="a" style="left:407.7px;top:203.0px;width:5px;height:13.8px;background:#4caf50"></div><svg style="left:430px;top:205.5px;" width="10" height="10" viewBox="0 0 10 10"><circle cx="5" cy="4.5" r="4" fill="#4caf50"/></svg><svg style="left:457px;top:205.5px;" width="16" height="16" viewBox="0 0 16 16"><g transform="scale(0.98)"><path d="M5.6 5.6 L11.3 11.3" stroke="#414757" stroke-width="3" stroke-linecap="round"/><circle cx="4.4" cy="4.4" r="3.6" fill="#414757"/><path d="M2.2 2.2 L0 4.4 L2.2 6.6 M2.2 2.2 L4.4 0" stroke="none"/><circle cx="2.4" cy="2.4" r="1.9" fill="#f5f5f6"/><path d="M2.4 2.4 L-1 -1" stroke="#f5f5f6" stroke-width="3"/></g></svg><svg style="left:482px;top:201.5px;" width="18" height="18" viewBox="0 0 18 18"><circle cx="8.5" cy="8.8" r="7.1" fill="none" stroke="#414757" stroke-width="1.2"/><path d="M5.8 7.4 H11.2 L8.5 10.6 Z" fill="#414757"/></svg><div class="a" style="left:163px;top:236px;width:342px;height:49px;background:#f5f5f6;border-radius:4px"></div><svg style="left:176px;top:240.5px;" width="14" height="19" viewBox="0 0 14 19"><rect x="2.2" y="0.6" width="9.6" height="17.8" rx="3.2" fill="#2f4a6e"/><rect x="3.5" y="4.6" width="7" height="10.8" rx="2" fill="#2c3038"/><rect x="4.4" y="8" width="5.2" height="4" rx="1.2" fill="#f2dcd6"/><rect x="0.6" y="6.2" width="2.2" height="1.8" fill="#2f4a6e"/><rect x="11.2" y="6.2" width="2.2" height="1.8" fill="#2f4a6e"/></svg><div class="t" style="left:206px;top:243.15px;font-size:14px;color:#2b2f3a;font-weight:normal;">BMW 735i</div><div class="t" style="left:206px;top:265.14px;font-size:12px;color:#7a7e87;width:126px;overflow:hidden;text-overflow:ellipsis;letter-spacing:-0.3px">5. Allee, Mittelfeld 30539, Hannover</div><svg style="left:340px;top:252.5px;" width="18" height="18" viewBox="0 0 18 18"><circle cx="9.3" cy="9" r="5.9" fill="none" stroke="#c4c7cc" stroke-width="1.7"/><path d="M9.3 1 V4 M9.3 14 V17 M1 9 H4 M14.6 9 H17.6" stroke="#c4c7cc" stroke-width="1.8"/></svg><svg style="left:369px;top:251.5px;" width="20" height="20" viewBox="0 0 20 20"><circle cx="9.5" cy="10" r="7" fill="none" stroke="#c4c7cc" stroke-width="1.3"/><path d="M5.3 8.7 H9 V6 L13.5 10 L9 14 V11.3 H5.3 Z" fill="#c4c7cc"/></svg><div class="a" style="left:398.6px;top:254.2px;width:5.4px;height:13.4px;background:#c4c7cc"></div><div class="a" style="left:406.3px;top:254.2px;width:5.2px;height:13.4px;border:1px solid #f0443a;background:#fff"></div><div class="a" style="left:406.3px;top:264.0px;width:5.2px;height:3.6px;background:#f0443a"></div><svg style="left:430px;top:256.5px;" width="10" height="10" viewBox="0 0 10 10"><circle cx="5" cy="4.5" r="4" fill="#c4c7cc"/></svg><svg style="left:457px;top:256.5px;" width="16" height="16" viewBox="0 0 16 16"><g transform="scale(0.98)"><path d="M5.6 5.6 L11.3 11.3" stroke="#414757" stroke-width="3" stroke-linecap="round"/><circle cx="4.4" cy="4.4" r="3.6" fill="#414757"/><path d="M2.2 2.2 L0 4.4 L2.2 6.6 M2.2 2.2 L4.4 0" stroke="none"/><circle cx="2.4" cy="2.4" r="1.9" fill="#f5f5f6"/><path d="M2.4 2.4 L-1 -1" stroke="#f5f5f6" stroke-width="3"/></g></svg><svg style="left:482px;top:252.5px;" width="18" height="18" viewBox="0 0 18 18"><circle cx="8.5" cy="8.8" r="7.1" fill="none" stroke="#414757" stroke-width="1.2"/><path d="M5.8 7.4 H11.2 L8.5 10.6 Z" fill="#414757"/></svg><div class="a" style="left:163px;top:287px;width:342px;height:49px;background:#f5f5f6;border-radius:4px"></div><div class="a" style="left:145px;top:306px;width:12px;height:12px;background:#4a8cf6;border-radius:2px"></div><svg style="left:145px;top:306px;" width="12" height="12" viewBox="0 0 12 12"><path d="M2.8 6.2 L5 8.4 L9.4 3.8" stroke="#fff" stroke-width="1.8" fill="none"/></svg><svg style="left:173px;top:294px;" width="22" height="14" viewBox="0 0 22 14"><path d="M2 9 L3 5.5 L8 3 L14 3 L18 6 L20.5 7 L20.5 10 L2 10 Z" fill="#e5481e"/><path d="M8.5 4 L13.5 4 L15.5 6.2 L7 6.2 Z" fill="#fff" opacity="0.6"/><circle cx="6" cy="10" r="2" fill="#333"/><circle cx="16" cy="10" r="2" fill="#333"/></svg><div class="t" style="left:206px;top:294.15px;font-size:14px;color:#2b2f3a;font-weight:normal;">Caiman</div><div class="t" style="left:206px;top:316.14px;font-size:12px;color:#7a7e87;width:126px;overflow:hidden;text-overflow:ellipsis;letter-spacing:-0.3px">Ozo g., 14A, Vilnius, Lietuva</div><svg style="left:340px;top:303.5px;" width="18" height="18" viewBox="0 0 18 18"><circle cx="9.3" cy="9" r="5.9" fill="none" stroke="#414757" stroke-width="1.7"/><path d="M9.3 1 V4 M9.3 14 V17 M1 9 H4 M14.6 9 H17.6" stroke="#414757" stroke-width="1.8"/></svg><svg style="left:369px;top:302.5px;" width="20" height="20" viewBox="0 0 20 20"><circle cx="9.5" cy="10" r="7" fill="none" stroke="#c4c7cc" stroke-width="1.3"/><path d="M5.3 8.7 H9 V6 L13.5 10 L9 14 V11.3 H5.3 Z" fill="#c4c7cc"/></svg><div class="a" style="left:398.6px;top:305.2px;width:5.4px;height:13.4px;background:#c4c7cc"></div><div class="a" style="left:406.3px;top:305.2px;width:5.2px;height:13.4px;border:1px solid #f0443a;background:#fff"></div><div class="a" style="left:406.3px;top:315.0px;width:5.2px;height:3.6px;background:#f0443a"></div><svg style="left:430px;top:307.5px;" width="10" height="10" viewBox="0 0 10 10"><circle cx="5" cy="4.5" r="4" fill="#c4c7cc"/></svg><svg style="left:457px;top:307.5px;" width="16" height="16" viewBox="0 0 16 16"><g transform="scale(0.98)"><path d="M5.6 5.6 L11.3 11.3" stroke="#414757" stroke-width="3" stroke-linecap="round"/><circle cx="4.4" cy="4.4" r="3.6" fill="#414757"/><path d="M2.2 2.2 L0 4.4 L2.2 6.6 M2.2 2.2 L4.4 0" stroke="none"/><circle cx="2.4" cy="2.4" r="1.9" fill="#f5f5f6"/><path d="M2.4 2.4 L-1 -1" stroke="#f5f5f6" stroke-width="3"/></g></svg><svg style="left:482px;top:303.5px;" width="18" height="18" viewBox="0 0 18 18"><circle cx="8.5" cy="8.8" r="7.1" fill="none" stroke="#414757" stroke-width="1.2"/><path d="M5.8 7.4 H11.2 L8.5 10.6 Z" fill="#414757"/></svg><div class="a" style="left:163px;top:338px;width:342px;height:49px;background:#f5f5f6;border-radius:4px"></div><svg style="left:166px;top:347px;" width="30" height="13" viewBox="0 0 30 13"><path d="M1 3 Q1 1 3 1 L20 1 L26 5 L29 6 L29 10 L1 10 Z" fill="#f2b128"/><rect x="4" y="2.5" width="5" height="3" fill="#555"/><rect x="10.5" y="2.5" width="5" height="3" fill="#555"/><rect x="17" y="2.5" width="4" height="3" fill="#555"/><circle cx="7" cy="10" r="2.4" fill="#333"/><circle cx="23" cy="10" r="2.4" fill="#333"/></svg><div class="t" style="left:206px;top:345.15px;font-size:14px;color:#2b2f3a;font-weight:normal;">Dandelion</div><div class="t" style="left:206px;top:367.14px;font-size:12px;color:#7a7e87;width:126px;overflow:hidden;text-overflow:ellipsis;letter-spacing:-0.3px">P-255, Кемеровская область</div><svg style="left:340px;top:354.5px;" width="18" height="18" viewBox="0 0 18 18"><circle cx="9.3" cy="9" r="5.9" fill="none" stroke="#414757" stroke-width="1.7"/><path d="M9.3 1 V4 M9.3 14 V17 M1 9 H4 M14.6 9 H17.6" stroke="#414757" stroke-width="1.8"/></svg><svg style="left:369px;top:353.5px;" width="20" height="20" viewBox="0 0 20 20"><circle cx="11" cy="10.9" r="7.4" fill="#4caf50"/><circle cx="4.7" cy="3" r="3.4" fill="#f5f5f6"/><path d="M6.1 9.5 H11.5 V7.2 L16.6 10.9 L11.5 14.6 V12.3 H6.1 Z" fill="#fff"/><circle cx="4.8" cy="2.9" r="1.9" fill="none" stroke="#4caf50" stroke-width="1.3"/><path d="M3.4 4.3 L0.8 6.6" stroke="#4caf50" stroke-width="1.4"/></svg><div class="a" style="left:399.3px;top:356.0px;width:5px;height:13.8px;background:#4caf50"></div><div class="a" style="left:407.7px;top:356.0px;width:5px;height:13.8px;background:#4caf50"></div><svg style="left:430px;top:358.5px;" width="10" height="10" viewBox="0 0 10 10"><circle cx="5" cy="4.5" r="4" fill="#4caf50"/></svg><svg style="left:457px;top:358.5px;" width="16" height="16" viewBox="0 0 16 16"><g transform="scale(0.98)"><path d="M5.6 5.6 L11.3 11.3" stroke="#414757" stroke-width="3" stroke-linecap="round"/><circle cx="4.4" cy="4.4" r="3.6" fill="#414757"/><path d="M2.2 2.2 L0 4.4 L2.2 6.6 M2.2 2.2 L4.4 0" stroke="none"/><circle cx="2.4" cy="2.4" r="1.9" fill="#f5f5f6"/><path d="M2.4 2.4 L-1 -1" stroke="#f5f5f6" stroke-width="3"/></g></svg><svg style="left:482px;top:354.5px;" width="18" height="18" viewBox="0 0 18 18"><circle cx="8.5" cy="8.8" r="7.1" fill="none" stroke="#414757" stroke-width="1.2"/><path d="M5.8 7.4 H11.2 L8.5 10.6 Z" fill="#414757"/></svg><div class="a" style="left:163px;top:389px;width:342px;height:49px;background:#f5f5f6;border-radius:4px"></div><svg style="left:173px;top:395px;" width="22" height="14" viewBox="0 0 22 14"><path d="M1 4 L3 2 L20 1 L21 9 L2 11 Z" fill="#5aa845"/><path d="M3 3.5 L19.5 2.5 L19.8 5.5 L2.5 6.5 Z" fill="#ddd"/><circle cx="6" cy="10.5" r="1.7" fill="#333"/><circle cx="17" cy="9.5" r="1.7" fill="#333"/></svg><div class="t" style="left:206px;top:396.15px;font-size:14px;color:#2b2f3a;font-weight:normal;">Green Bus</div><div class="t" style="left:206px;top:418.14px;font-size:12px;color:#7a7e87;width:126px;overflow:hidden;text-overflow:ellipsis;letter-spacing:-0.3px">Milton St, Milton, MA 02186</div><svg style="left:340px;top:405.5px;" width="18" height="18" viewBox="0 0 18 18"><circle cx="9.3" cy="9" r="5.9" fill="none" stroke="#414757" stroke-width="1.7"/><path d="M9.3 1 V4 M9.3 14 V17 M1 9 H4 M14.6 9 H17.6" stroke="#414757" stroke-width="1.8"/></svg><svg style="left:369px;top:404.5px;" width="20" height="20" viewBox="0 0 20 20"><circle cx="11" cy="10.9" r="7.4" fill="#4caf50"/><circle cx="4.7" cy="3" r="3.4" fill="#f5f5f6"/><path d="M6.1 9.5 H11.5 V7.2 L16.6 10.9 L11.5 14.6 V12.3 H6.1 Z" fill="#fff"/><circle cx="4.8" cy="2.9" r="1.9" fill="none" stroke="#4caf50" stroke-width="1.3"/><path d="M3.4 4.3 L0.8 6.6" stroke="#4caf50" stroke-width="1.4"/></svg><div class="a" style="left:399.3px;top:407.0px;width:5px;height:13.8px;background:#4caf50"></div><div class="a" style="left:407.7px;top:407.0px;width:5px;height:13.8px;background:#4caf50"></div><svg style="left:430px;top:409.5px;" width="10" height="10" viewBox="0 0 10 10"><circle cx="5" cy="4.5" r="4" fill="#4caf50"/></svg><svg style="left:457px;top:409.5px;" width="16" height="16" viewBox="0 0 16 16"><g transform="scale(0.98)"><path d="M5.6 5.6 L11.3 11.3" stroke="#414757" stroke-width="3" stroke-linecap="round"/><circle cx="4.4" cy="4.4" r="3.6" fill="#414757"/><path d="M2.2 2.2 L0 4.4 L2.2 6.6 M2.2 2.2 L4.4 0" stroke="none"/><circle cx="2.4" cy="2.4" r="1.9" fill="#f5f5f6"/><path d="M2.4 2.4 L-1 -1" stroke="#f5f5f6" stroke-width="3"/></g></svg><svg style="left:482px;top:405.5px;" width="18" height="18" viewBox="0 0 18 18"><circle cx="8.5" cy="8.8" r="7.1" fill="none" stroke="#414757" stroke-width="1.2"/><path d="M5.8 7.4 H11.2 L8.5 10.6 Z" fill="#414757"/></svg><div class="a" style="left:163px;top:440px;width:342px;height:49px;background:#f5f5f6;border-radius:4px"></div><div class="a" style="left:145px;top:459px;width:12px;height:12px;background:#4a8cf6;border-radius:2px"></div><svg style="left:145px;top:459px;" width="12" height="12" viewBox="0 0 12 12"><path d="M2.8 6.2 L5 8.4 L9.4 3.8" stroke="#fff" stroke-width="1.8" fill="none"/></svg><svg style="left:173px;top:445px;" width="22" height="15" viewBox="0 0 22 15"><path d="M2 6 L5 2 L15 1.5 L19 5 L20 10 L2 11 Z" fill="#f2b128"/><rect x="6" y="3" width="8" height="3" fill="#555"/><circle cx="6" cy="11" r="2" fill="#333"/><circle cx="16" cy="10.5" r="2" fill="#333"/></svg><div class="t" style="left:206px;top:447.15px;font-size:14px;color:#2b2f3a;font-weight:normal;">Jupiter</div><div class="t" style="left:206px;top:469.14px;font-size:12px;color:#7a7e87;width:126px;overflow:hidden;text-overflow:ellipsis;letter-spacing:-0.3px">Ozo g., 14A, Vilnius, Lietuva</div><svg style="left:340px;top:456.5px;" width="18" height="18" viewBox="0 0 18 18"><circle cx="9.3" cy="9" r="5.9" fill="none" stroke="#414757" stroke-width="1.7"/><path d="M9.3 1 V4 M9.3 14 V17 M1 9 H4 M14.6 9 H17.6" stroke="#414757" stroke-width="1.8"/></svg><svg style="left:369px;top:455.5px;" width="20" height="20" viewBox="0 0 20 20"><circle cx="9.5" cy="10" r="7" fill="none" stroke="#c4c7cc" stroke-width="1.3"/><rect x="5.3" y="8.8" width="8.4" height="2.6" fill="#c4c7cc"/></svg><div class="a" style="left:398.6px;top:458.2px;width:5.4px;height:13.4px;background:#c4c7cc"></div><div class="a" style="left:406.3px;top:458.2px;width:5.2px;height:13.4px;border:1px solid #f0443a;background:#fff"></div><div class="a" style="left:406.3px;top:468.0px;width:5.2px;height:3.6px;background:#f0443a"></div><svg style="left:430px;top:460.5px;" width="10" height="10" viewBox="0 0 10 10"><circle cx="5" cy="4.5" r="4" fill="#c4c7cc"/></svg><svg style="left:457px;top:460.5px;" width="16" height="16" viewBox="0 0 16 16"><g transform="scale(0.98)"><path d="M5.6 5.6 L11.3 11.3" stroke="#414757" stroke-width="3" stroke-linecap="round"/><circle cx="4.4" cy="4.4" r="3.6" fill="#414757"/><path d="M2.2 2.2 L0 4.4 L2.2 6.6 M2.2 2.2 L4.4 0" stroke="none"/><circle cx="2.4" cy="2.4" r="1.9" fill="#f5f5f6"/><path d="M2.4 2.4 L-1 -1" stroke="#f5f5f6" stroke-width="3"/></g></svg><svg style="left:482px;top:456.5px;" width="18" height="18" viewBox="0 0 18 18"><circle cx="8.5" cy="8.8" r="7.1" fill="none" stroke="#414757" stroke-width="1.2"/><path d="M5.8 7.4 H11.2 L8.5 10.6 Z" fill="#414757"/></svg><div class="a" style="left:163px;top:491px;width:342px;height:49px;background:#f5f5f6;border-radius:4px"></div><div class="a" style="left:145px;top:510px;width:12px;height:12px;background:#4a8cf6;border-radius:2px"></div><svg style="left:145px;top:510px;" width="12" height="12" viewBox="0 0 12 12"><path d="M2.8 6.2 L5 8.4 L9.4 3.8" stroke="#fff" stroke-width="1.8" fill="none"/></svg><svg style="left:173px;top:498px;" width="22" height="14" viewBox="0 0 22 14"><path d="M2 9 L3 5.5 L8 3 L14 3 L18 6 L20.5 7 L20.5 10 L2 10 Z" fill="#8a2be2"/><path d="M8.5 4 L13.5 4 L15.5 6.2 L7 6.2 Z" fill="#fff" opacity="0.6"/><circle cx="6" cy="10" r="2" fill="#333"/><circle cx="16" cy="10" r="2" fill="#333"/></svg><div class="t" style="left:206px;top:498.15px;font-size:14px;color:#2b2f3a;font-weight:normal;">Neptuno</div><div class="t" style="left:206px;top:520.14px;font-size:12px;color:#7a7e87;width:126px;overflow:hidden;text-overflow:ellipsis;letter-spacing:-0.3px">Messe-Schnellweg, Mittelfeld</div><svg style="left:340px;top:507.5px;" width="18" height="18" viewBox="0 0 18 18"><circle cx="9.3" cy="9" r="5.9" fill="none" stroke="#414757" stroke-width="1.7"/><path d="M9.3 1 V4 M9.3 14 V17 M1 9 H4 M14.6 9 H17.6" stroke="#414757" stroke-width="1.8"/></svg><svg style="left:369px;top:506.5px;" width="20" height="20" viewBox="0 0 20 20"><circle cx="11" cy="10.9" r="7.4" fill="#4caf50"/><circle cx="4.7" cy="3" r="3.4" fill="#f5f5f6"/><path d="M6.1 9.5 H11.5 V7.2 L16.6 10.9 L11.5 14.6 V12.3 H6.1 Z" fill="#fff"/><circle cx="4.8" cy="2.9" r="1.9" fill="none" stroke="#4caf50" stroke-width="1.3"/><path d="M3.4 4.3 L0.8 6.6" stroke="#4caf50" stroke-width="1.4"/></svg><div class="a" style="left:399.3px;top:509.0px;width:5px;height:13.8px;background:#4caf50"></div><div class="a" style="left:407.7px;top:509.0px;width:5px;height:13.8px;background:#4caf50"></div><svg style="left:430px;top:511.5px;" width="10" height="10" viewBox="0 0 10 10"><circle cx="5" cy="4.5" r="4" fill="#4caf50"/></svg><svg style="left:457px;top:511.5px;" width="16" height="16" viewBox="0 0 16 16"><g transform="scale(0.98)"><path d="M5.6 5.6 L11.3 11.3" stroke="#414757" stroke-width="3" stroke-linecap="round"/><circle cx="4.4" cy="4.4" r="3.6" fill="#414757"/><path d="M2.2 2.2 L0 4.4 L2.2 6.6 M2.2 2.2 L4.4 0" stroke="none"/><circle cx="2.4" cy="2.4" r="1.9" fill="#f5f5f6"/><path d="M2.4 2.4 L-1 -1" stroke="#f5f5f6" stroke-width="3"/></g></svg><svg style="left:482px;top:507.5px;" width="18" height="18" viewBox="0 0 18 18"><circle cx="8.5" cy="8.8" r="7.1" fill="none" stroke="#414757" stroke-width="1.2"/><path d="M5.8 7.4 H11.2 L8.5 10.6 Z" fill="#414757"/></svg><div class="a" style="left:163px;top:542px;width:342px;height:49px;background:#f5f5f6;border-radius:4px"></div><svg style="left:173px;top:549px;" width="22" height="14" viewBox="0 0 22 14"><path d="M2 9 L3 5.5 L8 3 L14 3 L18 6 L20.5 7 L20.5 10 L2 10 Z" fill="#7ac943"/><path d="M8.5 4 L13.5 4 L15.5 6.2 L7 6.2 Z" fill="#fff" opacity="0.6"/><circle cx="6" cy="10" r="2" fill="#333"/><circle cx="16" cy="10" r="2" fill="#333"/></svg><div class="t" style="left:206px;top:549.15px;font-size:14px;color:#2b2f3a;font-weight:normal;">Olivius</div><div class="t" style="left:206px;top:571.14px;font-size:12px;color:#7a7e87;width:126px;overflow:hidden;text-overflow:ellipsis;letter-spacing:-0.3px">Indian Creek Dr 3801, Miami</div><svg style="left:340px;top:558.5px;" width="18" height="18" viewBox="0 0 18 18"><circle cx="9.3" cy="9" r="5.9" fill="none" stroke="#c4c7cc" stroke-width="1.7"/><path d="M9.3 1 V4 M9.3 14 V17 M1 9 H4 M14.6 9 H17.6" stroke="#c4c7cc" stroke-width="1.8"/></svg><svg style="left:369px;top:557.5px;" width="20" height="20" viewBox="0 0 20 20"><circle cx="9.5" cy="10" r="7" fill="none" stroke="#c4c7cc" stroke-width="1.3"/><path d="M5.3 8.7 H9 V6 L13.5 10 L9 14 V11.3 H5.3 Z" fill="#c4c7cc"/></svg><div class="a" style="left:398.6px;top:560.2px;width:5.4px;height:13.4px;background:#c4c7cc"></div><div class="a" style="left:406.3px;top:560.2px;width:5.2px;height:13.4px;border:1px solid #f0443a;background:#fff"></div><div class="a" style="left:406.3px;top:570.0px;width:5.2px;height:3.6px;background:#f0443a"></div><svg style="left:430px;top:562.5px;" width="10" height="10" viewBox="0 0 10 10"><circle cx="5" cy="4.5" r="4" fill="#c4c7cc"/></svg><svg style="left:457px;top:562.5px;" width="16" height="16" viewBox="0 0 16 16"><g transform="scale(0.98)"><path d="M5.6 5.6 L11.3 11.3" stroke="#414757" stroke-width="3" stroke-linecap="round"/><circle cx="4.4" cy="4.4" r="3.6" fill="#414757"/><path d="M2.2 2.2 L0 4.4 L2.2 6.6 M2.2 2.2 L4.4 0" stroke="none"/><circle cx="2.4" cy="2.4" r="1.9" fill="#f5f5f6"/><path d="M2.4 2.4 L-1 -1" stroke="#f5f5f6" stroke-width="3"/></g></svg><svg style="left:482px;top:558.5px;" width="18" height="18" viewBox="0 0 18 18"><circle cx="8.5" cy="8.8" r="7.1" fill="none" stroke="#414757" stroke-width="1.2"/><path d="M5.8 7.4 H11.2 L8.5 10.6 Z" fill="#414757"/></svg><div class="a" style="left:163px;top:593px;width:342px;height:49px;background:#f5f5f6;border-radius:4px"></div><div class="a" style="left:145px;top:612px;width:12px;height:12px;background:#4a8cf6;border-radius:2px"></div><svg style="left:145px;top:612px;" width="12" height="12" viewBox="0 0 12 12"><path d="M2.8 6.2 L5 8.4 L9.4 3.8" stroke="#fff" stroke-width="1.8" fill="none"/></svg><svg style="left:176px;top:597.5px;" width="14" height="19" viewBox="0 0 14 19"><rect x="2.2" y="0.6" width="9.6" height="17.8" rx="3.2" fill="#3aa9d8"/><rect x="3.5" y="4.6" width="7" height="10.8" rx="2" fill="#2c3038"/><rect x="4.4" y="8" width="5.2" height="4" rx="1.2" fill="#f2dcd6"/><rect x="0.6" y="6.2" width="2.2" height="1.8" fill="#3aa9d8"/><rect x="11.2" y="6.2" width="2.2" height="1.8" fill="#3aa9d8"/></svg><div class="t" style="left:206px;top:600.15px;font-size:14px;color:#2b2f3a;font-weight:normal;">SEAT</div><div class="t" style="left:206px;top:622.14px;font-size:12px;color:#7a7e87;width:126px;overflow:hidden;text-overflow:ellipsis;letter-spacing:-0.3px">Ozo g., 14A, Vilnius, Lietuva</div><svg style="left:340px;top:609.5px;" width="18" height="18" viewBox="0 0 18 18"><circle cx="9.3" cy="9" r="5.9" fill="none" stroke="#414757" stroke-width="1.7"/><path d="M9.3 1 V4 M9.3 14 V17 M1 9 H4 M14.6 9 H17.6" stroke="#414757" stroke-width="1.8"/></svg><svg style="left:369px;top:608.5px;" width="20" height="20" viewBox="0 0 20 20"><circle cx="11" cy="10.9" r="7.4" fill="#4caf50"/><circle cx="4.7" cy="3" r="3.4" fill="#f5f5f6"/><path d="M6.1 9.5 H11.5 V7.2 L16.6 10.9 L11.5 14.6 V12.3 H6.1 Z" fill="#fff"/><circle cx="4.8" cy="2.9" r="1.9" fill="none" stroke="#4caf50" stroke-width="1.3"/><path d="M3.4 4.3 L0.8 6.6" stroke="#4caf50" stroke-width="1.4"/></svg><div class="a" style="left:399.3px;top:611.0px;width:5px;height:13.8px;background:#4caf50"></div><div class="a" style="left:407.7px;top:611.0px;width:5px;height:13.8px;background:#4caf50"></div><svg style="left:430px;top:613.5px;" width="10" height="10" viewBox="0 0 10 10"><circle cx="5" cy="4.5" r="4" fill="#4caf50"/></svg><svg style="left:457px;top:613.5px;" width="16" height="16" viewBox="0 0 16 16"><g transform="scale(0.98)"><path d="M5.6 5.6 L11.3 11.3" stroke="#414757" stroke-width="3" stroke-linecap="round"/><circle cx="4.4" cy="4.4" r="3.6" fill="#414757"/><path d="M2.2 2.2 L0 4.4 L2.2 6.6 M2.2 2.2 L4.4 0" stroke="none"/><circle cx="2.4" cy="2.4" r="1.9" fill="#f5f5f6"/><path d="M2.4 2.4 L-1 -1" stroke="#f5f5f6" stroke-width="3"/></g></svg><svg style="left:482px;top:609.5px;" width="18" height="18" viewBox="0 0 18 18"><circle cx="8.5" cy="8.8" r="7.1" fill="none" stroke="#414757" stroke-width="1.2"/><path d="M5.8 7.4 H11.2 L8.5 10.6 Z" fill="#414757"/></svg><div class="a" style="left:163px;top:644px;width:342px;height:49px;background:#f5f5f6;border-radius:4px"></div><div class="a" style="left:145px;top:663px;width:12px;height:12px;background:#4a8cf6;border-radius:2px"></div><svg style="left:145px;top:663px;" width="12" height="12" viewBox="0 0 12 12"><path d="M2.8 6.2 L5 8.4 L9.4 3.8" stroke="#fff" stroke-width="1.8" fill="none"/></svg><svg style="left:176px;top:648.5px;" width="14" height="19" viewBox="0 0 14 19"><rect x="2.2" y="0.6" width="9.6" height="17.8" rx="3.2" fill="#f0a92a"/><rect x="3.5" y="4.6" width="7" height="10.8" rx="2" fill="#2c3038"/><rect x="4.4" y="8" width="5.2" height="4" rx="1.2" fill="#f2dcd6"/><rect x="0.6" y="6.2" width="2.2" height="1.8" fill="#f0a92a"/><rect x="11.2" y="6.2" width="2.2" height="1.8" fill="#f0a92a"/></svg><div class="t" style="left:206px;top:651.15px;font-size:14px;color:#2b2f3a;font-weight:normal;">Skoda</div><div class="t" style="left:206px;top:673.14px;font-size:12px;color:#7a7e87;width:126px;overflow:hidden;text-overflow:ellipsis;letter-spacing:-0.3px">Ozo g., 14A, Vilnius, Lietuva</div><svg style="left:340px;top:660.5px;" width="18" height="18" viewBox="0 0 18 18"><circle cx="9.3" cy="9" r="5.9" fill="none" stroke="#414757" stroke-width="1.7"/><path d="M9.3 1 V4 M9.3 14 V17 M1 9 H4 M14.6 9 H17.6" stroke="#414757" stroke-width="1.8"/></svg><svg style="left:369px;top:659.5px;" width="20" height="20" viewBox="0 0 20 20"><circle cx="9.5" cy="10" r="7" fill="none" stroke="#c4c7cc" stroke-width="1.3"/><rect x="5.3" y="8.8" width="8.4" height="2.6" fill="#c4c7cc"/></svg><div class="a" style="left:398.6px;top:662.2px;width:5.4px;height:13.4px;background:#c4c7cc"></div><div class="a" style="left:406.3px;top:662.2px;width:5.2px;height:13.4px;border:1px solid #f0443a;background:#fff"></div><div class="a" style="left:406.3px;top:672.0px;width:5.2px;height:3.6px;background:#f0443a"></div><svg style="left:430px;top:664.5px;" width="10" height="10" viewBox="0 0 10 10"><circle cx="5" cy="4.5" r="4" fill="#c4c7cc"/></svg><svg style="left:457px;top:664.5px;" width="16" height="16" viewBox="0 0 16 16"><g transform="scale(0.98)"><path d="M5.6 5.6 L11.3 11.3" stroke="#414757" stroke-width="3" stroke-linecap="round"/><circle cx="4.4" cy="4.4" r="3.6" fill="#414757"/><path d="M2.2 2.2 L0 4.4 L2.2 6.6 M2.2 2.2 L4.4 0" stroke="none"/><circle cx="2.4" cy="2.4" r="1.9" fill="#f5f5f6"/><path d="M2.4 2.4 L-1 -1" stroke="#f5f5f6" stroke-width="3"/></g></svg><svg style="left:482px;top:660.5px;" width="18" height="18" viewBox="0 0 18 18"><circle cx="8.5" cy="8.8" r="7.1" fill="none" stroke="#414757" stroke-width="1.2"/><path d="M5.8 7.4 H11.2 L8.5 10.6 Z" fill="#414757"/></svg><div class="a" style="left:163px;top:695px;width:342px;height:49px;background:#f5f5f6;border-radius:4px"></div><svg style="left:176px;top:699.5px;" width="14" height="19" viewBox="0 0 14 19"><rect x="2.2" y="0.6" width="9.6" height="17.8" rx="3.2" fill="#e0463c"/><rect x="3.5" y="4.6" width="7" height="10.8" rx="2" fill="#2c3038"/><rect x="4.4" y="8" width="5.2" height="4" rx="1.2" fill="#f2dcd6"/><rect x="0.6" y="6.2" width="2.2" height="1.8" fill="#e0463c"/><rect x="11.2" y="6.2" width="2.2" height="1.8" fill="#e0463c"/></svg><div class="t" style="left:206px;top:702.15px;font-size:14px;color:#2b2f3a;font-weight:normal;">Toyota Camry</div><div class="t" style="left:206px;top:724.14px;font-size:12px;color:#7a7e87;width:126px;overflow:hidden;text-overflow:ellipsis;letter-spacing:-0.3px">Am Mittelfelde 98A, Mittelfeld</div><svg style="left:340px;top:711.5px;" width="18" height="18" viewBox="0 0 18 18"><circle cx="9.3" cy="9" r="5.9" fill="none" stroke="#414757" stroke-width="1.7"/><path d="M9.3 1 V4 M9.3 14 V17 M1 9 H4 M14.6 9 H17.6" stroke="#414757" stroke-width="1.8"/></svg><svg style="left:369px;top:710.5px;" width="20" height="20" viewBox="0 0 20 20"><circle cx="11" cy="10.9" r="7.4" fill="#4caf50"/><circle cx="4.7" cy="3" r="3.4" fill="#f5f5f6"/><path d="M6.1 9.5 H11.5 V7.2 L16.6 10.9 L11.5 14.6 V12.3 H6.1 Z" fill="#fff"/><circle cx="4.8" cy="2.9" r="1.9" fill="none" stroke="#4caf50" stroke-width="1.3"/><path d="M3.4 4.3 L0.8 6.6" stroke="#4caf50" stroke-width="1.4"/></svg><div class="a" style="left:399.3px;top:713.0px;width:5px;height:13.8px;background:#4caf50"></div><div class="a" style="left:407.7px;top:713.0px;width:5px;height:13.8px;background:#4caf50"></div><svg style="left:430px;top:715.5px;" width="10" height="10" viewBox="0 0 10 10"><circle cx="5" cy="4.5" r="4" fill="#4caf50"/></svg><svg style="left:457px;top:715.5px;" width="16" height="16" viewBox="0 0 16 16"><g transform="scale(0.98)"><path d="M5.6 5.6 L11.3 11.3" stroke="#414757" stroke-width="3" stroke-linecap="round"/><circle cx="4.4" cy="4.4" r="3.6" fill="#414757"/><path d="M2.2 2.2 L0 4.4 L2.2 6.6 M2.2 2.2 L4.4 0" stroke="none"/><circle cx="2.4" cy="2.4" r="1.9" fill="#f5f5f6"/><path d="M2.4 2.4 L-1 -1" stroke="#f5f5f6" stroke-width="3"/></g></svg><svg style="left:482px;top:711.5px;" width="18" height="18" viewBox="0 0 18 18"><circle cx="8.5" cy="8.8" r="7.1" fill="none" stroke="#414757" stroke-width="1.2"/><path d="M5.8 7.4 H11.2 L8.5 10.6 Z" fill="#414757"/></svg><div class="a" style="left:163px;top:746px;width:342px;height:49px;background:#f5f5f6;border-radius:4px"></div><svg style="left:173px;top:752px;" width="22" height="15" viewBox="0 0 22 15"><path d="M1 4 L4 1.5 L16 1.5 L20 5 L21 11 L1 11 Z" fill="#3d7fd6"/><rect x="5" y="3" width="9" height="3.5" fill="#cde"/><circle cx="6" cy="11" r="2" fill="#333"/><circle cx="16" cy="11" r="2" fill="#333"/></svg><div class="t" style="left:206px;top:753.15px;font-size:14px;color:#2b2f3a;font-weight:normal;">Wingy Van</div><div class="t" style="left:206px;top:775.14px;font-size:12px;color:#7a7e87;width:126px;overflow:hidden;text-overflow:ellipsis;letter-spacing:-0.3px">Gerhart-Hauptmann-Straße</div><svg style="left:340px;top:762.5px;" width="18" height="18" viewBox="0 0 18 18"><circle cx="9.3" cy="9" r="5.9" fill="none" stroke="#414757" stroke-width="1.7"/><path d="M9.3 1 V4 M9.3 14 V17 M1 9 H4 M14.6 9 H17.6" stroke="#414757" stroke-width="1.8"/></svg><svg style="left:369px;top:761.5px;" width="20" height="20" viewBox="0 0 20 20"><circle cx="11" cy="10.9" r="7.4" fill="#4caf50"/><circle cx="4.7" cy="3" r="3.4" fill="#f5f5f6"/><path d="M6.1 9.5 H11.5 V7.2 L16.6 10.9 L11.5 14.6 V12.3 H6.1 Z" fill="#fff"/><circle cx="4.8" cy="2.9" r="1.9" fill="none" stroke="#4caf50" stroke-width="1.3"/><path d="M3.4 4.3 L0.8 6.6" stroke="#4caf50" stroke-width="1.4"/></svg><div class="a" style="left:399.3px;top:764.0px;width:5px;height:13.8px;background:#4caf50"></div><div class="a" style="left:407.7px;top:764.0px;width:5px;height:13.8px;background:#4caf50"></div><svg style="left:430px;top:766.5px;" width="10" height="10" viewBox="0 0 10 10"><circle cx="5" cy="4.5" r="4" fill="#4caf50"/></svg><svg style="left:457px;top:766.5px;" width="16" height="16" viewBox="0 0 16 16"><g transform="scale(0.98)"><path d="M5.6 5.6 L11.3 11.3" stroke="#414757" stroke-width="3" stroke-linecap="round"/><circle cx="4.4" cy="4.4" r="3.6" fill="#414757"/><path d="M2.2 2.2 L0 4.4 L2.2 6.6 M2.2 2.2 L4.4 0" stroke="none"/><circle cx="2.4" cy="2.4" r="1.9" fill="#f5f5f6"/><path d="M2.4 2.4 L-1 -1" stroke="#f5f5f6" stroke-width="3"/></g></svg><svg style="left:482px;top:762.5px;" width="18" height="18" viewBox="0 0 18 18"><circle cx="8.5" cy="8.8" r="7.1" fill="none" stroke="#414757" stroke-width="1.2"/><path d="M5.8 7.4 H11.2 L8.5 10.6 Z" fill="#414757"/></svg><div class="a" style="left:525px;top:46px;width:637px;height:696px;background:#fff;border-radius:8px;box-shadow:0 1px 6px rgba(0,0,0,0.28)"></div><div class="t" style="left:537.3px;top:64.35px;font-size:14px;color:#2b2f3a;font-weight:normal;">Información secundaria:</div><div class="a" style="left:748px;top:58px;width:402px;height:27px;border:1px solid #dcdfe4;border-radius:4px;background:#fff"></div><div class="t" style="left:756px;top:64.45px;font-size:14px;color:#2b2f3a;font-weight:normal;">Dirección</div><svg style="left:1126.7px;top:68.5px;" width="10" height="6" viewBox="0 0 10 6"><path d="M0.8 0.8 L5 4.8 L9.2 0.8" stroke="#4d5263" stroke-width="1.6" fill="none"/></svg><div class="a" style="left:537px;top:94px;width:613px;height:1px;background:#e3e5e9"></div><div class="a" style="left:537px;top:211px;width:613px;height:1px;background:#e3e5e9"></div><div class="a" style="left:537px;top:414px;width:613px;height:1px;background:#e3e5e9"></div><div class="a" style="left:537px;top:587px;width:613px;height:1px;background:#e3e5e9"></div><div class="a" style="left:537px;top:111px;width:12px;height:12px;border:1.3px solid #575e6e;border-radius:2.5px;background:#fff"></div><div class="a" style="left:557px;top:111px;width:12px;height:12px;background:#f2f2f3;border:1px solid #e8e8ea;border-radius:2px"></div><svg style="left:579px;top:108px;" width="20" height="20" viewBox="0 0 20 20"><path d="M7.5 15.8 C3.5 11 1.5 8.3 1.5 6.3 A6 6 0 0 1 13.5 6.3 C13.5 8.3 11.5 11 7.5 15.8 Z" fill="none" stroke="#4d5263" stroke-width="1.2"/><circle cx="7.5" cy="6.5" r="1.8" fill="#4d5263"/></svg><div class="t" style="left:598.6px;top:108.45px;font-size:14px;color:#2b2f3a;font-weight:normal;">Ubicación</div><div class="a" style="left:537px;top:147px;width:12px;height:12px;border:1.3px solid #575e6e;border-radius:2.5px;background:#fff"></div><div class="a" style="left:557px;top:147px;width:12px;height:12px;background:#575e6e;border-radius:2.5px"></div><svg style="left:557px;top:147px;" width="12" height="12" viewBox="0 0 12 12"><path d="M2.8 6.2 L5 8.4 L9.3 3.9" stroke="#fff" stroke-width="1.7" fill="none"/></svg><svg style="left:578px;top:145px;" width="20" height="20" viewBox="0 0 20 20"><circle cx="8" cy="7.8" r="7.2" fill="none" stroke="#4d5263" stroke-width="1.2"/><path d="M0.9 5.6 Q8 4.6 15.1 5.6 L15.1 7.3 Q8 6.6 0.9 7.3 Z" fill="#4d5263"/><rect x="5.9" y="6.4" width="4.2" height="3.9" fill="none" stroke="#4d5263" stroke-width="1.2"/><path d="M6 10 L2.6 12.6 M10 10 L13.4 12.6" stroke="#4d5263" stroke-width="1.3"/></svg><div class="t" style="left:598.6px;top:144.45px;font-size:14px;color:#2b2f3a;font-weight:normal;">Conductores</div><div class="a" style="left:537px;top:183px;width:12px;height:12px;border:1.3px solid #575e6e;border-radius:2.5px;background:#fff"></div><div class="a" style="left:557px;top:183px;width:12px;height:12px;background:#575e6e;border-radius:2.5px"></div><svg style="left:557px;top:183px;" width="12" height="12" viewBox="0 0 12 12"><path d="M2.8 6.2 L5 8.4 L9.3 3.9" stroke="#fff" stroke-width="1.7" fill="none"/></svg><svg style="left:578px;top:183px;" width="20" height="20" viewBox="0 0 20 20"><path d="M0.6 9.8 V0.6 H12.4 V9.4" fill="none" stroke="#4d5263" stroke-width="1.2"/><path d="M0.6 5.2 H12.4 V9.8 H7.3 A2.8 2.8 0 0 0 1.9 9.8 H0.6 Z" fill="#4d5263"/><circle cx="4.6" cy="10" r="1.7" fill="none" stroke="#4d5263" stroke-width="1.1"/><path d="M12.4 9.3 H15.5 M15.5 7 V11.6" stroke="#4d5263" stroke-width="1.1" fill="none"/></svg><div class="t" style="left:598.6px;top:180.45px;font-size:14px;color:#2b2f3a;font-weight:normal;">Remolques</div><div class="a" style="left:537px;top:225px;width:12px;height:12px;background:#575e6e;border-radius:2.5px"></div><svg style="left:537px;top:225px;" width="12" height="12" viewBox="0 0 12 12"><path d="M2.8 6.2 L5 8.4 L9.3 3.9" stroke="#fff" stroke-width="1.7" fill="none"/></svg><div class="a" style="left:557px;top:225px;width:12px;height:12px;border:1.3px solid #575e6e;border-radius:2.5px;background:#fff"></div><svg style="left:578px;top:222px;" width="20" height="20" viewBox="0 0 20 20"><circle cx="8.5" cy="8.5" r="6.8" fill="none" stroke="#4d5263" stroke-width="1.2"/><circle cx="8.5" cy="8.5" r="1" fill="#4d5263"/><path d="M8.5 0 V3.5 M8.5 13.5 V17 M0 8.5 H3.5 M13.5 8.5 H17" stroke="#4d5263" stroke-width="1.2"/></svg><div class="t" style="left:598.6px;top:222.45px;font-size:14px;color:#2b2f3a;font-weight:normal;">Seguimiento de unidad</div><div class="a" style="left:537px;top:257px;width:12px;height:12px;background:#575e6e;border-radius:2.5px"></div><svg style="left:537px;top:257px;" width="12" height="12" viewBox="0 0 12 12"><path d="M2.8 6.2 L5 8.4 L9.3 3.9" stroke="#fff" stroke-width="1.7" fill="none"/></svg><div class="a" style="left:557px;top:257px;width:12px;height:12px;border:1.3px solid #575e6e;border-radius:2.5px;background:#fff"></div><svg style="left:579px;top:256px;" width="20" height="20" viewBox="0 0 20 20"><circle cx="8" cy="7.6" r="7" fill="none" stroke="#4d5263" stroke-width="1.2"/><path d="M4.2 6.3 H8 V4 L11.8 7.6 L8 11.2 V8.9 H4.2 Z" fill="#4d5263"/></svg><div class="t" style="left:598.6px;top:254.45px;font-size:14px;color:#2b2f3a;font-weight:normal;">Estado de movimiento</div><div class="a" style="left:537px;top:293px;width:12px;height:12px;background:#575e6e;border-radius:2.5px"></div><svg style="left:537px;top:293px;" width="12" height="12" viewBox="0 0 12 12"><path d="M2.8 6.2 L5 8.4 L9.3 3.9" stroke="#fff" stroke-width="1.7" fill="none"/></svg><div class="a" style="left:557px;top:293px;width:12px;height:12px;border:1.3px solid #575e6e;border-radius:2.5px;background:#fff"></div><svg style="left:576px;top:290px;" width="20" height="20" viewBox="0 0 20 20"><path d="M4.3 7.1 A6 6 0 0 0 12.8 15.4 Z" fill="none" stroke="#4d5263" stroke-width="1.2" stroke-linejoin="round"/><path d="M8.5 11.2 L10.4 9.4" stroke="#4d5263" stroke-width="1.5"/><path d="M8 5.3 A5.6 5.6 0 0 1 14.5 11.8 M7.1 3.1 A8.2 8.2 0 0 1 17 12.6" stroke="#4d5263" stroke-width="1.2" fill="none"/></svg><div class="t" style="left:598.6px;top:290.45px;font-size:14px;color:#2b2f3a;font-weight:normal;">Actualidad de datos</div><div class="a" style="left:537px;top:329px;width:12px;height:12px;background:#575e6e;border-radius:2.5px"></div><svg style="left:537px;top:329px;" width="12" height="12" viewBox="0 0 12 12"><path d="M2.8 6.2 L5 8.4 L9.3 3.9" stroke="#fff" stroke-width="1.7" fill="none"/></svg><div class="a" style="left:557px;top:329px;width:12px;height:12px;border:1.3px solid #575e6e;border-radius:2.5px;background:#fff"></div><svg style="left:579px;top:328px;" width="20" height="20" viewBox="0 0 20 20"><rect x="2.2" y="0.8" width="9.6" height="8.2" fill="none" stroke="#4d5263" stroke-width="1.2"/><path d="M7 9 V11.5" stroke="#4d5263" stroke-width="1.2"/><rect x="0.6" y="11.6" width="13" height="2.8" fill="none" stroke="#4d5263" stroke-width="1.1"/><rect x="5.5" y="10.8" width="3" height="3" fill="#4d5263"/></svg><div class="t" style="left:598.6px;top:326.45px;font-size:14px;color:#2b2f3a;font-weight:normal;">Estado de conexión</div><div class="a" style="left:537px;top:362px;width:12px;height:12px;border:1.3px solid #575e6e;border-radius:2.5px;background:#fff"></div><div class="a" style="left:557px;top:362px;width:12px;height:12px;background:#575e6e;border-radius:2.5px"></div><svg style="left:557px;top:362px;" width="12" height="12" viewBox="0 0 12 12"><path d="M2.8 6.2 L5 8.4 L9.3 3.9" stroke="#fff" stroke-width="1.7" fill="none"/></svg><svg style="left:579px;top:359px;" width="20" height="20" viewBox="0 0 20 20"><circle cx="7.8" cy="8" r="6.9" fill="none" stroke="#4d5263" stroke-width="1.2"/><path d="M7.8 1 V3 M1 8 H3 M14.6 8 H12.6 M3 3.2 L4.3 4.5 M12.6 3.2 L11.3 4.5" stroke="#4d5263" stroke-width="1.1"/><path d="M6.8 9.8 L10.5 5.2 L8.8 10.6 Z" fill="#4d5263"/></svg><div class="t" style="left:598.6px;top:359.45px;font-size:14px;color:#2b2f3a;font-weight:normal;">Estado de sensor</div><div class="a" style="left:537px;top:390px;width:12px;height:12px;border:1.3px solid #575e6e;border-radius:2.5px;background:#fff"></div><div class="a" style="left:557px;top:390px;width:12px;height:12px;background:#575e6e;border-radius:2.5px"></div><svg style="left:557px;top:390px;" width="12" height="12" viewBox="0 0 12 12"><path d="M2.8 6.2 L5 8.4 L9.3 3.9" stroke="#fff" stroke-width="1.7" fill="none"/></svg><svg style="left:577px;top:391px;" width="20" height="20" viewBox="0 0 20 20"><rect x="0.6" y="0.6" width="15" height="10.6" fill="none" stroke="#4d5263" stroke-width="1.2"/><rect x="15.6" y="3.5" width="2.2" height="5" fill="#4d5263"/><path d="M9 2.5 L5.5 6.5 H8 L6.8 9.5 L10.5 5.3 H8 Z" fill="#4d5263"/></svg><div class="t" style="left:598.6px;top:387.45px;font-size:14px;color:#2b2f3a;font-weight:normal;">Nivel de batería</div><div class="a" style="left:537px;top:431px;width:12px;height:12px;border:1.3px solid #575e6e;border-radius:2.5px;background:#fff"></div><div class="a" style="left:557px;top:431px;width:12px;height:12px;background:#575e6e;border-radius:2.5px"></div><svg style="left:557px;top:431px;" width="12" height="12" viewBox="0 0 12 12"><path d="M2.8 6.2 L5 8.4 L9.3 3.9" stroke="#fff" stroke-width="1.7" fill="none"/></svg><svg style="left:578px;top:429px;" width="20" height="20" viewBox="0 0 20 20"><path d="M0.8 0.5 V15" stroke="#4d5263" stroke-width="1.3"/><rect x="1.5" y="0.6" width="13" height="7.4" fill="none" stroke="#4d5263" stroke-width="1.1"/><path d="M3.5 2.3 h1.5 M7 2.3 h1.5 M10.5 2.3 h1.5 M5.2 4.2 h1.5 M8.7 4.2 h1.5 M3.5 6.1 h1.5 M7 6.1 h1.5 M10.5 6.1 h1.5" stroke="#4d5263" stroke-width="1.5"/></svg><div class="t" style="left:598.6px;top:428.45px;font-size:14px;color:#2b2f3a;font-weight:normal;">Recorrido rápido</div><div class="a" style="left:537px;top:467px;width:12px;height:12px;border:1.3px solid #575e6e;border-radius:2.5px;background:#fff"></div><div class="a" style="left:557px;top:467px;width:12px;height:12px;background:#575e6e;border-radius:2.5px"></div><svg style="left:557px;top:467px;" width="12" height="12" viewBox="0 0 12 12"><path d="M2.8 6.2 L5 8.4 L9.3 3.9" stroke="#fff" stroke-width="1.7" fill="none"/></svg><svg style="left:579px;top:465px;" width="20" height="20" viewBox="0 0 20 20"><rect x="0.6" y="0.6" width="12.8" height="15" fill="none" stroke="#4d5263" stroke-width="1.2"/><rect x="0.6" y="0.6" width="12.8" height="3" fill="#4d5263"/><path d="M3 8.3 H11 M3 11.3 H11" stroke="#4d5263" stroke-width="1.2"/></svg><div class="t" style="left:598.6px;top:464.45px;font-size:14px;color:#2b2f3a;font-weight:normal;">Mensajes</div><div class="a" style="left:537px;top:503px;width:12px;height:12px;border:1.3px solid #575e6e;border-radius:2.5px;background:#fff"></div><div class="a" style="left:557px;top:503px;width:12px;height:12px;background:#575e6e;border-radius:2.5px"></div><svg style="left:557px;top:503px;" width="12" height="12" viewBox="0 0 12 12"><path d="M2.8 6.2 L5 8.4 L9.3 3.9" stroke="#fff" stroke-width="1.7" fill="none"/></svg><svg style="left:579px;top:501px;" width="20" height="20" viewBox="0 0 20 20"><rect x="0.6" y="1.8" width="12.8" height="13.6" fill="none" stroke="#4d5263" stroke-width="1.2"/><rect x="3.5" y="0.3" width="7" height="2.8" fill="#4d5263"/><rect x="3.5" y="10" width="1.6" height="3.3" fill="#4d5263"/><rect x="6.2" y="7.5" width="1.6" height="5.8" fill="#4d5263"/><rect x="8.9" y="9" width="1.6" height="4.3" fill="#4d5263"/></svg><div class="t" style="left:598.6px;top:500.45px;font-size:14px;color:#2b2f3a;font-weight:normal;">Informe rápido</div><div class="a" style="left:537px;top:535px;width:12px;height:12px;border:1.3px solid #575e6e;border-radius:2.5px;background:#fff"></div><div class="a" style="left:557px;top:535px;width:12px;height:12px;background:#575e6e;border-radius:2.5px"></div><svg style="left:557px;top:535px;" width="12" height="12" viewBox="0 0 12 12"><path d="M2.8 6.2 L5 8.4 L9.3 3.9" stroke="#fff" stroke-width="1.7" fill="none"/></svg><svg style="left:578px;top:533px;" width="20" height="20" viewBox="0 0 20 20"><rect x="0.6" y="0.6" width="16" height="14.6" fill="none" stroke="#4d5263" stroke-width="1.2"/><circle cx="4.3" cy="4.3" r="1.4" fill="#4d5263"/><path d="M2 13.5 L7 8 L10 11 L12.5 8.5 L15.5 13.5 Z" fill="#4d5263"/></svg><div class="t" style="left:598.6px;top:532.45px;font-size:14px;color:#2b2f3a;font-weight:normal;">Multimedia</div><div class="a" style="left:537px;top:563px;width:12px;height:12px;border:1.3px solid #575e6e;border-radius:2.5px;background:#fff"></div><div class="a" style="left:557px;top:563px;width:12px;height:12px;background:#575e6e;border-radius:2.5px"></div><svg style="left:557px;top:563px;" width="12" height="12" viewBox="0 0 12 12"><path d="M2.8 6.2 L5 8.4 L9.3 3.9" stroke="#fff" stroke-width="1.7" fill="none"/></svg><svg style="left:578px;top:564px;" width="20" height="20" viewBox="0 0 20 20"><rect x="0.6" y="0.6" width="11.3" height="9" rx="2" fill="none" stroke="#4d5263" stroke-width="1.2"/><rect x="3.2" y="3.3" width="5.8" height="2" fill="#4d5263"/><path d="M12.8 5 L16 2 V8.5 Z" fill="none" stroke="#4d5263" stroke-width="1.1"/></svg><div class="t" style="left:598.6px;top:560.45px;font-size:14px;color:#2b2f3a;font-weight:normal;">Vídeo</div><div class="a" style="left:537px;top:601px;width:12px;height:12px;border:1.3px solid #575e6e;border-radius:2.5px;background:#fff"></div><div class="a" style="left:557px;top:601px;width:12px;height:12px;background:#575e6e;border-radius:2.5px"></div><svg style="left:557px;top:601px;" width="12" height="12" viewBox="0 0 12 12"><path d="M2.8 6.2 L5 8.4 L9.3 3.9" stroke="#fff" stroke-width="1.7" fill="none"/></svg><svg style="left:578px;top:600px;" width="20" height="20" viewBox="0 0 20 20"><rect x="0.6" y="0.6" width="15" height="10.4" fill="none" stroke="#4d5263" stroke-width="1.2"/><path d="M6 3 L10.5 5.8 L6 8.6 Z" fill="#4d5263"/><rect x="6.5" y="11" width="3" height="2" fill="#4d5263"/><rect x="3.2" y="13" width="9.8" height="1.6" fill="#4d5263"/></svg><div class="t" style="left:598.6px;top:598.45px;font-size:14px;color:#2b2f3a;font-weight:normal;">Comandos</div><div class="a" style="left:537px;top:629px;width:12px;height:12px;border:1.3px solid #575e6e;border-radius:2.5px;background:#fff"></div><div class="a" style="left:557px;top:629px;width:12px;height:12px;background:#f2f2f3;border:1px solid #e8e8ea;border-radius:2px"></div><svg style="left:577px;top:627px;" width="20" height="20" viewBox="0 0 20 20"><path d="M0.6 0.6 H16 V11 H10 L8.3 13.2 L6.6 11 H0.6 Z" fill="none" stroke="#4d5263" stroke-width="1.1"/><text x="8.3" y="8.6" font-size="6.4" font-family="Liberation Sans" font-weight="bold" fill="#4d5263" text-anchor="middle">SMS</text></svg><div class="t" style="left:598.6px;top:626.45px;font-size:14px;color:#2b2f3a;font-weight:normal;">SMS</div><div class="a" style="left:537px;top:657px;width:12px;height:12px;border:1.3px solid #575e6e;border-radius:2.5px;background:#fff"></div><div class="a" style="left:557px;top:657px;width:12px;height:12px;background:#575e6e;border-radius:2.5px"></div><svg style="left:557px;top:657px;" width="12" height="12" viewBox="0 0 12 12"><path d="M2.8 6.2 L5 8.4 L9.3 3.9" stroke="#fff" stroke-width="1.7" fill="none"/></svg><svg style="left:578px;top:656px;" width="20" height="20" viewBox="0 0 20 20"><path d="M0.8 14.5 V0.8 H14 V6" stroke="#4d5263" stroke-width="1.3" fill="none"/><path d="M0.8 7.5 H5" stroke="#4d5263" stroke-width="1.3"/><path d="M10 7.3 V14.5 M6.4 10.9 H13.6" stroke="#4d5263" stroke-width="1.9"/></svg><div class="t" style="left:598.6px;top:654.45px;font-size:14px;color:#2b2f3a;font-weight:normal;">Registro de eventos</div><div class="a" style="left:537px;top:686px;width:12px;height:12px;background:#575e6e;border-radius:2.5px"></div><svg style="left:537px;top:686px;" width="12" height="12" viewBox="0 0 12 12"><path d="M2.8 6.2 L5 8.4 L9.3 3.9" stroke="#fff" stroke-width="1.7" fill="none"/></svg><div class="a" style="left:557px;top:686px;width:12px;height:12px;border:1.3px solid #575e6e;border-radius:2.5px;background:#fff"></div><svg style="left:579.5px;top:685.5px;" width="20" height="20" viewBox="0 0 20 20"><g transform="scale(1.1)"><path d="M5.6 5.6 L11.3 11.3" stroke="#4d5263" stroke-width="3" stroke-linecap="round"/><circle cx="4.4" cy="4.4" r="3.6" fill="#4d5263"/><circle cx="2.4" cy="2.4" r="1.9" fill="#fff"/><path d="M2.4 2.4 L-1 -1" stroke="#fff" stroke-width="3"/></g></svg><div class="t" style="left:598.6px;top:683.45px;font-size:14px;color:#2b2f3a;font-weight:normal;">Propiedades</div><div class="a" style="left:537px;top:714px;width:12px;height:12px;background:#575e6e;border-radius:2.5px"></div><svg style="left:537px;top:714px;" width="12" height="12" viewBox="0 0 12 12"><path d="M2.8 6.2 L5 8.4 L9.3 3.9" stroke="#fff" stroke-width="1.7" fill="none"/></svg><div class="a" style="left:557px;top:714px;width:12px;height:12px;border:1.3px solid #575e6e;border-radius:2.5px;background:#fff"></div><svg style="left:581px;top:716px;" width="20" height="20" viewBox="0 0 20 20"><path d="M1 1 L9 9 M9 1 L1 9" stroke="#f23b2f" stroke-width="2.3"/></svg><div class="t" style="left:598.6px;top:711.45px;font-size:14px;color:#2b2f3a;font-weight:normal;">Limpiar lista</div><div class="a" style="left:748px;top:103px;width:402px;height:27px;border:1px solid #dcdfe4;border-radius:4px;background:#fff"></div><div class="t" style="left:756px;top:109.45px;font-size:14px;color:#2b2f3a;font-weight:normal;">Direcciones</div><svg style="left:1126.7px;top:113.5px;" width="10" height="6" viewBox="0 0 10 6"><path d="M0.8 0.8 L5 4.8 L9.2 0.8" stroke="#4d5263" stroke-width="1.6" fill="none"/></svg><div class="a" style="left:748px;top:139px;width:402px;height:27px;border:1px solid #dcdfe4;border-radius:4px;background:#f4f4f5"></div><div class="t" style="left:756px;top:145.45px;font-size:14px;color:#b3b6bc;font-weight:normal;">Imagen y nombre</div><svg style="left:1126.7px;top:149.5px;" width="10" height="6" viewBox="0 0 10 6"><path d="M0.8 0.8 L5 4.8 L9.2 0.8" stroke="#4d5263" stroke-width="1.6" fill="none"/></svg><div class="a" style="left:748px;top:175px;width:402px;height:27px;border:1px solid #dcdfe4;border-radius:4px;background:#f4f4f5"></div><div class="t" style="left:756px;top:181.45px;font-size:14px;color:#b3b6bc;font-weight:normal;">Imagen y nombre</div><svg style="left:1126.7px;top:185.5px;" width="10" height="6" viewBox="0 0 10 6"><path d="M0.8 0.8 L5 4.8 L9.2 0.8" stroke="#4d5263" stroke-width="1.6" fill="none"/></svg><svg style="left:759px;top:259px;" width="6" height="8" viewBox="0 0 6 8"><path d="M5 0.5 L1 4 L5 7.5 Z" fill="#4d5263"/></svg><div class="a" style="left:776px;top:249px;width:43px;height:27px;border:1px solid #dcdfe4;border-radius:4px;background:#fff"></div><div class="t" style="left:784px;top:254.75px;font-size:14px;color:#2b2f3a;font-weight:normal;">60</div><svg style="left:830px;top:259px;" width="6" height="8" viewBox="0 0 6 8"><path d="M1 0.5 L5 4 L1 7.5 Z" fill="#4d5263"/></svg><div class="t" style="left:846.2px;top:254.75px;font-size:14px;color:#2b2f3a;font-weight:normal;">min</div><svg style="left:759px;top:295px;" width="6" height="8" viewBox="0 0 6 8"><path d="M5 0.5 L1 4 L5 7.5 Z" fill="#c8cbd0"/></svg><div class="a" style="left:776px;top:285px;width:43px;height:27px;border:1px solid #dcdfe4;border-radius:4px;background:#f4f4f5"></div><div class="t" style="left:784px;top:290.75px;font-size:14px;color:#b3b6bc;font-weight:normal;">600</div><svg style="left:830px;top:295px;" width="6" height="8" viewBox="0 0 6 8"><path d="M1 0.5 L5 4 L1 7.5 Z" fill="#c8cbd0"/></svg><div class="t" style="left:846.2px;top:290.75px;font-size:14px;color:#2b2f3a;font-weight:normal;">min</div><svg style="left:759px;top:331px;" width="6" height="8" viewBox="0 0 6 8"><path d="M5 0.5 L1 4 L5 7.5 Z" fill="#4d5263"/></svg><div class="a" style="left:776px;top:321px;width:43px;height:27px;border:1px solid #dcdfe4;border-radius:4px;background:#fff"></div><div class="t" style="left:784px;top:326.75px;font-size:14px;color:#2b2f3a;font-weight:normal;">5</div><svg style="left:830px;top:331px;" width="6" height="8" viewBox="0 0 6 8"><path d="M1 0.5 L5 4 L1 7.5 Z" fill="#4d5263"/></svg><div class="t" style="left:846.2px;top:326.75px;font-size:14px;color:#2b2f3a;font-weight:normal;">min</div><div class="a" style="left:880px;top:285px;width:270px;height:27px;border:1px solid #dcdfe4;border-radius:4px;background:#fff"></div><div class="t" style="left:888px;top:291.45px;font-size:14px;color:#2b2f3a;font-weight:normal;">Sin filtro</div><svg style="left:1126.7px;top:295.5px;" width="10" height="6" viewBox="0 0 10 6"><path d="M0.8 0.8 L5 4.8 L9.2 0.8" stroke="#4d5263" stroke-width="1.6" fill="none"/></svg><div class="a" style="left:748px;top:423px;width:402px;height:27px;border:1px solid #dcdfe4;border-radius:4px;background:#fff"></div><div class="t" style="left:756px;top:429.45px;font-size:14px;color:#2b2f3a;font-weight:normal;">Hoy</div><svg style="left:1126.7px;top:433.5px;" width="10" height="6" viewBox="0 0 10 6"><path d="M0.8 0.8 L5 4.8 L9.2 0.8" stroke="#4d5263" stroke-width="1.6" fill="none"/></svg><div class="a" style="left:748px;top:459px;width:402px;height:27px;border:1px solid #dcdfe4;border-radius:4px;background:#fff"></div><div class="t" style="left:756px;top:465.45px;font-size:14px;color:#2b2f3a;font-weight:normal;">Hoy</div><svg style="left:1126.7px;top:469.5px;" width="10" height="6" viewBox="0 0 10 6"><path d="M0.8 0.8 L5 4.8 L9.2 0.8" stroke="#4d5263" stroke-width="1.6" fill="none"/></svg><div class="a" style="left:748px;top:495px;width:201px;height:27px;border:1px solid #dcdfe4;border-radius:4px;background:#fff"></div><div class="t" style="left:756px;top:501.45px;font-size:14px;color:#2b2f3a;font-weight:normal;">Informe completo</div><svg style="left:925.7px;top:505.5px;" width="10" height="6" viewBox="0 0 10 6"><path d="M0.8 0.8 L5 4.8 L9.2 0.8" stroke="#4d5263" stroke-width="1.6" fill="none"/></svg><div class="a" style="left:955px;top:495px;width:195px;height:27px;border:1px solid #dcdfe4;border-radius:4px;background:#fff"></div><div class="t" style="left:963px;top:501.45px;font-size:14px;color:#2b2f3a;font-weight:normal;">Semana</div><svg style="left:1126.7px;top:505.5px;" width="10" height="6" viewBox="0 0 10 6"><path d="M0.8 0.8 L5 4.8 L9.2 0.8" stroke="#4d5263" stroke-width="1.6" fill="none"/></svg><svg style="left:159px;top:818px;" width="17" height="15" viewBox="0 0 17 15"><rect x="0.7" y="0.7" width="15.3" height="13.3" fill="none" stroke="#1f2a44" stroke-width="1.3"/><rect x="0.7" y="0.7" width="4.3" height="13.3" fill="#1f2a44"/></svg><svg style="left:194px;top:818px;" width="15" height="15" viewBox="0 0 15 15"><rect x="0.0" y="0.0" width="3.6" height="3.6" fill="#1f2a44"/><rect x="5.1" y="0.0" width="3.6" height="3.6" fill="#1f2a44"/><rect x="10.2" y="0.0" width="3.6" height="3.6" fill="#1f2a44"/><rect x="0.0" y="5.0" width="3.6" height="3.6" fill="#1f2a44"/><rect x="5.1" y="5.0" width="3.6" height="3.6" fill="#1f2a44"/><rect x="10.2" y="5.0" width="3.6" height="3.6" fill="#1f2a44"/><rect x="0.0" y="10.0" width="3.6" height="3.6" fill="#1f2a44"/><rect x="5.1" y="10.0" width="3.6" height="3.6" fill="#1f2a44"/><rect x="10.2" y="10.0" width="3.6" height="3.6" fill="#1f2a44"/></svg><div class="t" style="left:382px;width:400px;text-align:center;top:816.15px;font-size:14px;color:#2b2f3a;font-weight:normal;">© Gurtam</div><svg style="left:958px;top:817px;" width="18" height="15" viewBox="0 0 18 15"><path d="M1 1.5 Q1 0.5 2 0.5 H16 Q17 0.5 17 1.5 V11.5 Q17 12.5 16 12.5 V14.5 L14 12.5 H2 Q1 12.5 1 11.5 Z" fill="#565c6b"/><circle cx="9" cy="4.7" r="2.2" fill="#fff"/><path d="M4.8 10.5 Q5 7.5 9 7.5 Q13 7.5 13.2 10.5 Z" fill="#fff"/></svg><svg style="left:989.5px;top:817.5px;" width="18" height="15" viewBox="0 0 18 15"><rect x="0.5" y="0.5" width="16.5" height="13.8" fill="#a6aab4"/><rect x="1.5" y="1.4" width="14.5" height="3" fill="#fff"/><rect x="3.5" y="7.2" width="9.5" height="1.3" fill="#fff"/><rect x="3.3" y="10.1" width="6" height="1.3" fill="#fff"/></svg><svg style="left:1022px;top:817px;" width="26" height="17" viewBox="0 0 26 17"><rect x="1" y="1" width="15.7" height="11" fill="#a6aab4"/><path d="M1.3 1.5 L8.8 8.2 L16.4 1.5" stroke="#fff" stroke-width="1.6" fill="none"/><path d="M13.5 12.3 H19.5 M17 9.6 L19.5 12.3 L17 15" stroke="#fff" stroke-width="4" fill="none"/><path d="M13.5 12.3 H19.5 M17 9.6 L19.5 12.3 L17 15" stroke="#a6aab4" stroke-width="1.7" fill="none"/><path d="M23.5 7.8 H16.5 M19 5.2 L16.5 7.8 L19 10.4" stroke="#fff" stroke-width="3.6" fill="none"/><path d="M23.5 7.8 H16.5 M19 5.2 L16.5 7.8 L19 10.4" stroke="#a6aab4" stroke-width="1.7" fill="none"/></svg><svg style="left:1061.5px;top:817.5px;" width="17" height="15" viewBox="0 0 17 15"><rect x="0.5" y="0.5" width="15.5" height="13.8" fill="#a6aab4"/><circle cx="4.2" cy="4.3" r="1.7" fill="#fff"/><path d="M1.5 13.3 V10.8 L5 8 L8.3 10.3 L11.5 6.3 L15 10.8 V13.3 Z" fill="#fff"/></svg><svg style="left:1094.5px;top:818.5px;" width="20" height="13" viewBox="0 0 20 13"><rect x="0" y="0" width="9.6" height="11.8" fill="#1f2a44"/><rect x="10.8" y="0" width="8.8" height="11.8" fill="#1f2a44"/><rect x="1.8" y="2.2" width="5.6" height="1.4" fill="#fff"/><rect x="1.8" y="5.2" width="5.6" height="1.4" fill="#fff"/><rect x="1.8" y="8.2" width="5.6" height="1.4" fill="#fff"/></svg><div class="t" style="left:1130.5px;top:815.75px;font-size:14px;color:#2b2f3a;font-weight:normal;letter-spacing:-0.1px">10:42:54 (+02)</div><div class="a" style="left:0px;top:19px;width:121px;height:81px;background:#fff;border-radius:5px"></div><div class="a" style="left:2px;top:21px;width:117px;height:77px;background:#0b1f45;border-radius:3.5px"></div><div class="t" style="left:-139.5px;width:400px;text-align:center;top:32.17px;font-size:16.1px;color:#f4f5f7;font-weight:normal;">Personalizar</div><div class="t" style="left:-139.5px;width:400px;text-align:center;top:51.37px;font-size:16.1px;color:#f4f5f7;font-weight:normal;">opciones de</div><div class="t" style="left:-139.5px;width:400px;text-align:center;top:69.87px;font-size:16.1px;color:#f4f5f7;font-weight:normal;">seguimiento</div><div class="a" style="left:121px;top:58px;width:17px;height:4px;background:#fff"></div><div class="a" style="left:121px;top:59px;width:365px;height:2px;background:#0b1a3a"></div><div class="a" style="left:138px;top:58px;width:352px;height:1px;background:transparent"></div><svg style="left:484px;top:54px" width="12" height="12" viewBox="0 0 12 12"><circle cx="6" cy="6" r="4.3" fill="#fff"/><circle cx="6" cy="6" r="3" fill="#0b1a3a"/></svg></body></html>
